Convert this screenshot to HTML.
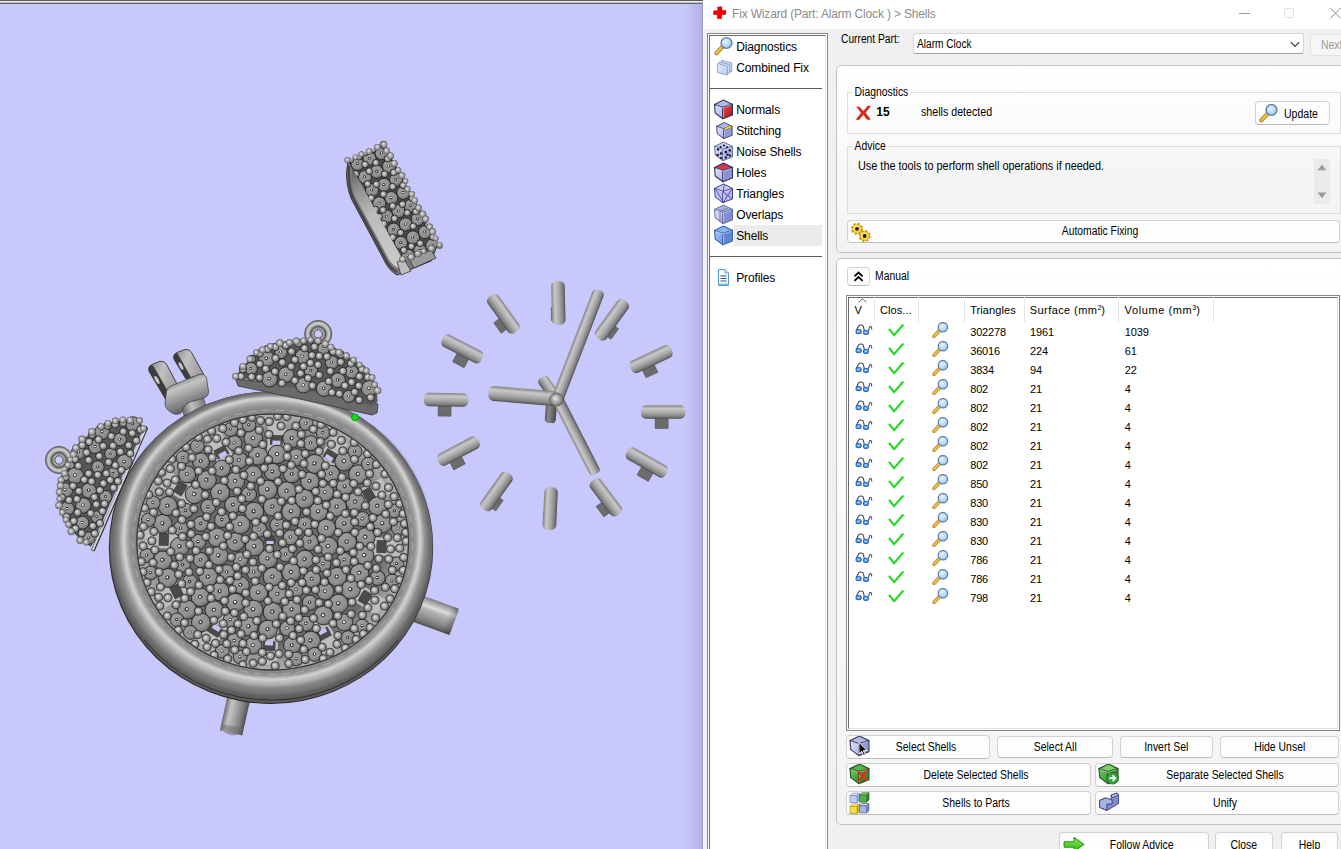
<!DOCTYPE html>
<html><head><meta charset="utf-8"><title>Fix Wizard</title>
<style>
*{box-sizing:border-box;margin:0;padding:0}
html,body{width:1341px;height:849px;overflow:hidden;background:#c8c8fc;font-family:"Liberation Sans",sans-serif;font-size:12px;color:#000}
#view{position:absolute;left:0;top:0;width:703px;height:849px;background:#c8c8fc;overflow:hidden}
#dlg{position:absolute;left:703px;top:0;width:638px;height:849px;background:#f0f0f0;overflow:hidden}
#dlg *{position:absolute}
#title{left:0;top:0;width:638px;height:29px;background:#fff}
#title .tt{left:29px;top:7px;font-size:12px;letter-spacing:-.17px;color:#8c8c8c;white-space:nowrap;line-height:14px}
.side{left:4px;top:33px;width:121px;height:830px;border:1px solid #868686;background:#fff}
.side .in{left:1px;top:1px;right:1px;bottom:0;border-left:1px solid #6a6a6a;border-top:1px solid #6a6a6a;border-right:1px solid #e3e3e3;background:#fff}
.si{left:33px;font-size:12px;letter-spacing:-.12px;white-space:nowrap;line-height:14px}
.sep{left:6px;width:113px;height:1px;background:#5a5a5a}
.ic{width:20px;height:20px;left:10px}
.gb{background:linear-gradient(#fff,#f3f3f3);border:1px solid #c2c2c2;border-radius:5px}
.fr{border:1px solid #dddddd}
.n{font-size:12px;white-space:nowrap;line-height:14px;transform:scaleX(.87);transform-origin:0 50%}
.nc{font-size:12px;white-space:nowrap;line-height:14px;transform:scaleX(.87);transform-origin:50% 50%;left:0;right:0;text-align:center}
.btn{background:#fdfdfd;border:1px solid #d2d2d2;border-bottom-color:#bdbdbd;border-radius:4px}
.cell{font-size:11px;letter-spacing:-.15px;white-space:nowrap;line-height:13px}
.hd{font-size:11px;letter-spacing:.05px;white-space:nowrap;line-height:13px}
.vs{width:1px;top:297px;height:25px;background:#e5e5e5}
</style></head><body>
<div id="view"><svg width="703" height="849" viewBox="0 0 703 849" style="position:absolute;left:0;top:0">
<defs><radialGradient id="s" cx=".5" cy=".5" r=".5" fx=".4" fy=".38"><stop offset="0" stop-color="#eaeaea"/><stop offset=".36" stop-color="#bebebe"/><stop offset=".76" stop-color="#8e8e8e"/><stop offset=".92" stop-color="#6a6a6a"/><stop offset="1" stop-color="#444"/></radialGradient><radialGradient id="c" cx=".5" cy=".5" r=".5" fx=".47" fy=".47"><stop offset="0" stop-color="#f4f4f4"/><stop offset=".09" stop-color="#e6e6e6"/><stop offset=".13" stop-color="#282828"/><stop offset=".2" stop-color="#585858"/><stop offset=".3" stop-color="#949494"/><stop offset=".8" stop-color="#8c8c8c"/><stop offset=".93" stop-color="#787878"/><stop offset="1" stop-color="#3a3a3a"/></radialGradient><linearGradient id="cs" x1=".2" y1="0" x2=".8" y2="1"><stop offset="0" stop-color="#fff" stop-opacity=".2"/><stop offset=".5" stop-color="#fff" stop-opacity="0"/><stop offset="1" stop-color="#000" stop-opacity=".28"/></linearGradient><linearGradient id="cy" x1="0" y1="0" x2="0" y2="1"><stop offset="0" stop-color="#848484"/><stop offset=".25" stop-color="#c8c8c8"/><stop offset=".55" stop-color="#aaaaaa"/><stop offset=".85" stop-color="#7e7e7e"/><stop offset="1" stop-color="#4c4c4c"/></linearGradient><linearGradient id="cyd" x1="0" y1="0" x2="0" y2="1"><stop offset="0" stop-color="#5a5a5a"/><stop offset=".3" stop-color="#8a8a8a"/><stop offset="1" stop-color="#484848"/></linearGradient><linearGradient id="cyl" x1="0" y1="0" x2="0" y2="1"><stop offset="0" stop-color="#505050"/><stop offset=".2" stop-color="#7a7a7a"/><stop offset=".5" stop-color="#a6a6a6"/><stop offset=".75" stop-color="#c4c4c4"/><stop offset="1" stop-color="#6c6c6c"/></linearGradient><linearGradient id="kcb" gradientUnits="userSpaceOnUse" x1="178" y1="378" x2="190" y2="408"><stop offset="0" stop-color="#7c7c7c"/><stop offset=".3" stop-color="#c4c4c4"/><stop offset=".6" stop-color="#9c9c9c"/><stop offset="1" stop-color="#666"/></linearGradient><linearGradient id="kst" gradientUnits="userSpaceOnUse" x1="182" y1="408" x2="206" y2="402"><stop offset="0" stop-color="#6a6a6a"/><stop offset=".4" stop-color="#c0c0c0"/><stop offset="1" stop-color="#707070"/></linearGradient><radialGradient id="fb"><stop offset="0" stop-color="#666"/><stop offset=".8" stop-color="#6c6c6c"/><stop offset=".9" stop-color="#989898"/><stop offset="1" stop-color="#b4b4b4"/></radialGradient><linearGradient id="stg" gradientUnits="userSpaceOnUse" x1="350" y1="165" x2="398" y2="262"><stop offset="0" stop-color="#4c4c4c"/><stop offset=".2" stop-color="#8a8a8a"/><stop offset=".5" stop-color="#bcbcbc"/><stop offset="1" stop-color="#cacaca"/></linearGradient><linearGradient id="kpr" x1="0" y1="0" x2="1" y2=".4"><stop offset="0" stop-color="#8a8a8a"/><stop offset=".5" stop-color="#c0c0c0"/><stop offset="1" stop-color="#a0a0a0"/></linearGradient><linearGradient id="cyr" x1="0" y1="0" x2="0" y2="1"><stop offset="0" stop-color="#7c7c7c"/><stop offset=".12" stop-color="#a8a8a8"/><stop offset=".3" stop-color="#dcdcdc"/><stop offset=".42" stop-color="#b4b4b4"/><stop offset=".7" stop-color="#909090"/><stop offset=".9" stop-color="#6e6e6e"/><stop offset="1" stop-color="#4a4a4a"/></linearGradient><linearGradient id="endg" x1="0" y1="0" x2="1" y2="0"><stop offset="0" stop-color="#000" stop-opacity="0"/><stop offset="1" stop-color="#000" stop-opacity=".28"/></linearGradient></defs>
<rect x="415.0" y="593.6" width="41.7" height="28.0" rx="0.0" fill="url(#cyr)" transform="rotate(19.9 415.0 607.6)" rx="5"/>
<rect x="446" y="607.800" width="8.500" height="28" rx="4" fill="url(#endg)" transform="rotate(20.700 454.200 621.800)"/>
<rect x="241.0" y="676.5" width="46.1" height="23.0" rx="0.0" fill="url(#cyl)" transform="rotate(102.5 241.0 688.0)" rx="4"/>
<path d="M221 724 Q222 734 232 735.500 Q241 736 243 728 Z" fill="#6a6a6a" opacity=".5"/>
<g id="key" stroke-linejoin="round">
<polygon points="181,402 203,396 207,410 184,416" fill="url(#kst)" stroke="#444" stroke-width=".6"/>
<path d="M166 400 L149.200 371.500 Q147.200 366.300 152.600 364.300 L159 361.600 Q164 360.400 166.500 364.300 L177 384 Z" fill="url(#kpr)" stroke="#222" stroke-width=".8"/>
<path d="M149.200 371.500 Q147.400 366.800 152 364.800 L154 367 L170 395 L166 400 Z" fill="#3c3c3c"/><ellipse cx="157" cy="380" rx="1.600" ry="4.500" fill="#c8c8c8" transform="rotate(-28 157 380)"/>
<path d="M186 379 L174.200 359.600 Q172.200 354.300 177.600 352.300 L184 349.800 Q189 348.600 191.500 352.500 L203.500 374 Z" fill="url(#kpr)" stroke="#222" stroke-width=".8"/>
<path d="M174.200 359.600 Q172.400 354.800 177 352.800 L178.600 355.200 L191 377.500 L186 379 Z" fill="#3c3c3c"/><ellipse cx="181" cy="366" rx="1.500" ry="4.200" fill="#c8c8c8" transform="rotate(-28 181 366)"/>
<path d="M166.500 391 Q167 387.500 171 386 L199 374.500 Q205 373 206.500 378 L208.500 391 Q209 396 204 398 L190 402 Q183 405 182 412 Q178 416 172 413 Q166 410 165 404 Z" fill="url(#kcb)" stroke="#3a3a3a" stroke-width=".7"/>
</g>
<ellipse cx="271.0" cy="547.7" rx="162.2" ry="156.2" fill="#2a2a2a"/>
<ellipse cx="271.3" cy="547.2" rx="161.5" ry="155.7" fill="#686868"/>
<ellipse cx="271.4" cy="546.5" rx="160.5" ry="154.5" fill="#6b6b6b"/>
<ellipse cx="271.4" cy="545.9" rx="159.4" ry="153.3" fill="#6e6e6e"/>
<ellipse cx="271.5" cy="545.2" rx="158.4" ry="152.2" fill="#727272"/>
<ellipse cx="271.5" cy="544.5" rx="157.3" ry="151.0" fill="#797979"/>
<ellipse cx="271.6" cy="543.8" rx="156.3" ry="149.8" fill="#808080"/>
<ellipse cx="271.6" cy="543.2" rx="155.3" ry="148.6" fill="#878787"/>
<ellipse cx="271.7" cy="542.5" rx="154.2" ry="147.5" fill="#8e8e8e"/>
<ellipse cx="271.7" cy="541.8" rx="153.2" ry="146.3" fill="#999999"/>
<ellipse cx="271.8" cy="541.2" rx="152.1" ry="145.1" fill="#a7a7a7"/>
<ellipse cx="271.9" cy="540.5" rx="151.1" ry="143.9" fill="#b6b6b6"/>
<ellipse cx="271.9" cy="539.8" rx="150.1" ry="142.8" fill="#c2c2c2"/>
<ellipse cx="272.0" cy="539.1" rx="149.0" ry="141.6" fill="#cfcfcf"/>
<ellipse cx="272.0" cy="538.9" rx="148.0" ry="140.5" fill="#cecece"/>
<ellipse cx="272.1" cy="539.2" rx="147.1" ry="139.5" fill="#bfbfbf"/>
<ellipse cx="272.1" cy="539.4" rx="146.1" ry="138.5" fill="#b2b2b2"/>
<ellipse cx="272.2" cy="539.7" rx="145.2" ry="137.6" fill="#a7a7a7"/>
<ellipse cx="272.3" cy="540.0" rx="144.2" ry="136.6" fill="#9c9c9c"/>
<ellipse cx="272.3" cy="540.2" rx="143.3" ry="135.6" fill="#969696"/>
<ellipse cx="272.4" cy="540.5" rx="142.3" ry="134.6" fill="#919191"/>
<ellipse cx="272.4" cy="540.7" rx="141.4" ry="133.6" fill="#8c8c8c"/>
<ellipse cx="272.5" cy="541.0" rx="140.4" ry="132.6" fill="#8a8a8a"/>
<ellipse cx="272.5" cy="541.2" rx="139.5" ry="131.7" fill="#898989"/>
<ellipse cx="272.6" cy="541.5" rx="138.5" ry="130.7" fill="#898989"/>
<ellipse cx="272.6" cy="541.7" rx="137.6" ry="129.7" fill="#8a8a8a"/>
<ellipse cx="272.7" cy="542.0" rx="136.6" ry="128.7" fill="#8c8c8c"/>
<path fill-rule="evenodd" fill="#000" opacity=".07" d="M109.8 547.2 a161.5 155.7 0 1 0 323.0 0 a161.5 155.7 0 1 0 -323.0 0 Z M109.8 539.2 a161.5 147.7 0 1 0 323.0 0 a161.5 147.7 0 1 0 -323.0 0 Z"/>
<path fill-rule="evenodd" fill="#000" opacity=".07" d="M109.8 547.2 a161.5 155.7 0 1 0 323.0 0 a161.5 155.7 0 1 0 -323.0 0 Z M109.8 543.2 a161.5 151.7 0 1 0 323.0 0 a161.5 151.7 0 1 0 -323.0 0 Z"/>
<clipPath id="btm"><rect x="100" y="640" width="350" height="80"/></clipPath><ellipse cx="271.3" cy="545.6" rx="160.3" ry="154.5" fill="none" stroke="#1e1e1e" stroke-width="1" opacity=".75" clip-path="url(#btm)"/>
<path d="M150 650 Q272 752 392 650" fill="none" stroke="#2a2a2a" stroke-width="1" opacity="0"/>
<ellipse cx="272.7" cy="542.0" rx="136.1" ry="128.2" fill="#333"/>
<clipPath id="fc"><ellipse cx="272.7" cy="542.0" rx="135.3" ry="127.4"/></clipPath>
<g clip-path="url(#fc)">
<ellipse cx="272.7" cy="542.0" rx="137.6" ry="129.7" fill="url(#fb)"/>
<g transform="rotate(2 276.5 440.1)"><rect x="267.5" y="421.1" width="18" height="36" fill="#bebebe"/><rect x="270.0" y="435.1" width="13" height="10" fill="#4a4a4a"/><rect x="272.5" y="440.6" width="8" height="4.5" fill="#c4c4f4"/></g>
<g transform="rotate(32 330.5 455.7)"><rect x="321.5" y="436.7" width="18" height="36" fill="#bebebe"/><rect x="324.0" y="450.7" width="13" height="10" fill="#4a4a4a"/><rect x="326.5" y="456.2" width="8" height="4.5" fill="#c4c4f4"/></g>
<g transform="rotate(62 368.9 494.6)"><rect x="359.9" y="475.6" width="18" height="36" fill="#bebebe"/><rect x="362.4" y="489.6" width="13" height="10" fill="#4a4a4a"/><rect x="364.9" y="495.1" width="8" height="4.5" fill="#4a4a4a"/></g>
<g transform="rotate(92 381.6 546.6)"><rect x="372.6" y="527.6" width="18" height="36" fill="#bebebe"/><rect x="375.1" y="541.6" width="13" height="10" fill="#4a4a4a"/><rect x="377.6" y="547.1" width="8" height="4.5" fill="#4a4a4a"/></g>
<g transform="rotate(122 365.1 597.6)"><rect x="356.1" y="578.6" width="18" height="36" fill="#bebebe"/><rect x="358.6" y="592.6" width="13" height="10" fill="#4a4a4a"/><rect x="361.1" y="598.1" width="8" height="4.5" fill="#4a4a4a"/></g>
<g transform="rotate(152 323.9 633.9)"><rect x="314.9" y="614.9" width="18" height="36" fill="#bebebe"/><rect x="317.4" y="628.9" width="13" height="10" fill="#4a4a4a"/><rect x="319.9" y="634.4" width="8" height="4.5" fill="#c4c4f4"/></g>
<g transform="rotate(182 268.9 645.9)"><rect x="259.9" y="626.9" width="18" height="36" fill="#bebebe"/><rect x="262.4" y="640.9" width="13" height="10" fill="#4a4a4a"/><rect x="264.9" y="646.4" width="8" height="4.5" fill="#c4c4f4"/></g>
<g transform="rotate(212 214.9 630.3)"><rect x="205.9" y="611.3" width="18" height="36" fill="#bebebe"/><rect x="208.4" y="625.3" width="13" height="10" fill="#4a4a4a"/><rect x="210.9" y="630.8" width="8" height="4.5" fill="#c4c4f4"/></g>
<g transform="rotate(242 176.5 591.4)"><rect x="167.5" y="572.4" width="18" height="36" fill="#bebebe"/><rect x="170.0" y="586.4" width="13" height="10" fill="#4a4a4a"/><rect x="172.5" y="591.9" width="8" height="4.5" fill="#4a4a4a"/></g>
<g transform="rotate(272 163.8 539.4)"><rect x="154.8" y="520.4" width="18" height="36" fill="#bebebe"/><rect x="157.3" y="534.4" width="13" height="10" fill="#4a4a4a"/><rect x="159.8" y="539.9" width="8" height="4.5" fill="#4a4a4a"/></g>
<g transform="rotate(302 180.3 488.4)"><rect x="171.3" y="469.4" width="18" height="36" fill="#bebebe"/><rect x="173.8" y="483.4" width="13" height="10" fill="#4a4a4a"/><rect x="176.3" y="488.9" width="8" height="4.5" fill="#4a4a4a"/></g>
<g transform="rotate(332 221.5 452.1)"><rect x="212.5" y="433.1" width="18" height="36" fill="#bebebe"/><rect x="215.0" y="447.1" width="13" height="10" fill="#4a4a4a"/><rect x="217.5" y="452.6" width="8" height="4.5" fill="#c4c4f4"/></g>
<circle cx="270" cy="540.5" r="6" fill="#484848"/><rect x="266.500" y="541" width="7" height="3" fill="#c4c4f4"/>
<circle cx="277.5" cy="525.1" r="7.6" fill="url(#c)" stroke="#242424" stroke-width=".8"/><circle cx="277.5" cy="525.1" r="7.0" fill="url(#cs)"/><circle cx="290.7" cy="537.4" r="7.6" fill="url(#c)" stroke="#242424" stroke-width=".8"/><circle cx="290.7" cy="537.4" r="7.0" fill="url(#cs)"/><circle cx="285.9" cy="554.4" r="7.6" fill="url(#c)" stroke="#242424" stroke-width=".8"/><circle cx="285.9" cy="554.4" r="7.0" fill="url(#cs)"/><circle cx="267.9" cy="558.9" r="9.4" fill="url(#c)" stroke="#242424" stroke-width=".8"/><circle cx="267.9" cy="558.9" r="8.8" fill="url(#cs)"/><circle cx="254.7" cy="546.6" r="9.4" fill="url(#c)" stroke="#242424" stroke-width=".8"/><circle cx="254.7" cy="546.6" r="8.8" fill="url(#cs)"/><circle cx="259.5" cy="529.6" r="7.6" fill="url(#c)" stroke="#242424" stroke-width=".8"/><circle cx="259.5" cy="529.6" r="7.0" fill="url(#cs)"/><circle cx="272.7" cy="507.0" r="9.4" fill="url(#c)" stroke="#242424" stroke-width=".8"/><circle cx="272.7" cy="507.0" r="8.8" fill="url(#cs)"/><circle cx="291.3" cy="511.7" r="9.6" fill="url(#c)" stroke="#242424" stroke-width=".8"/><circle cx="291.3" cy="511.7" r="9.0" fill="url(#cs)"/><circle cx="304.9" cy="524.5" r="7.6" fill="url(#c)" stroke="#242424" stroke-width=".8"/><circle cx="304.9" cy="524.5" r="7.0" fill="url(#cs)"/><circle cx="309.9" cy="542.0" r="8.6" fill="url(#c)" stroke="#242424" stroke-width=".8"/><circle cx="309.9" cy="542.0" r="8.0" fill="url(#cs)"/><circle cx="304.9" cy="559.5" r="9.4" fill="url(#c)" stroke="#242424" stroke-width=".8"/><circle cx="304.9" cy="559.5" r="8.8" fill="url(#cs)"/><circle cx="291.3" cy="572.3" r="9.6" fill="url(#c)" stroke="#242424" stroke-width=".8"/><circle cx="291.3" cy="572.3" r="9.0" fill="url(#cs)"/><circle cx="272.7" cy="577.0" r="9.6" fill="url(#c)" stroke="#242424" stroke-width=".8"/><circle cx="272.7" cy="577.0" r="9.0" fill="url(#cs)"/><circle cx="254.1" cy="572.3" r="7.6" fill="url(#c)" stroke="#242424" stroke-width=".8"/><circle cx="254.1" cy="572.3" r="7.0" fill="url(#cs)"/><circle cx="240.5" cy="559.5" r="7.6" fill="url(#c)" stroke="#242424" stroke-width=".8"/><circle cx="240.5" cy="559.5" r="7.0" fill="url(#cs)"/><circle cx="235.5" cy="542.0" r="9.4" fill="url(#c)" stroke="#242424" stroke-width=".8"/><circle cx="235.5" cy="542.0" r="8.8" fill="url(#cs)"/><circle cx="240.5" cy="524.5" r="9.6" fill="url(#c)" stroke="#242424" stroke-width=".8"/><circle cx="240.5" cy="524.5" r="9.0" fill="url(#cs)"/><circle cx="254.1" cy="511.7" r="9.6" fill="url(#c)" stroke="#242424" stroke-width=".8"/><circle cx="254.1" cy="511.7" r="9.0" fill="url(#cs)"/><circle cx="287.0" cy="491.2" r="9.6" fill="url(#c)" stroke="#242424" stroke-width=".8"/><circle cx="287.0" cy="491.2" r="9.0" fill="url(#cs)"/><circle cx="304.6" cy="498.9" r="9.6" fill="url(#c)" stroke="#242424" stroke-width=".8"/><circle cx="304.6" cy="498.9" r="9.0" fill="url(#cs)"/><circle cx="318.4" cy="511.8" r="9.4" fill="url(#c)" stroke="#242424" stroke-width=".8"/><circle cx="318.4" cy="511.8" r="8.8" fill="url(#cs)"/><circle cx="326.6" cy="528.3" r="9.4" fill="url(#c)" stroke="#242424" stroke-width=".8"/><circle cx="326.6" cy="528.3" r="8.8" fill="url(#cs)"/><circle cx="328.3" cy="546.5" r="9.6" fill="url(#c)" stroke="#242424" stroke-width=".8"/><circle cx="328.3" cy="546.5" r="9.0" fill="url(#cs)"/><circle cx="323.3" cy="564.1" r="7.6" fill="url(#c)" stroke="#242424" stroke-width=".8"/><circle cx="323.3" cy="564.1" r="7.0" fill="url(#cs)"/><circle cx="312.2" cy="579.1" r="8.6" fill="url(#c)" stroke="#242424" stroke-width=".8"/><circle cx="312.2" cy="579.1" r="8.0" fill="url(#cs)"/><circle cx="296.4" cy="589.6" r="7.6" fill="url(#c)" stroke="#242424" stroke-width=".8"/><circle cx="296.4" cy="589.6" r="7.0" fill="url(#cs)"/><circle cx="277.7" cy="594.3" r="9.4" fill="url(#c)" stroke="#242424" stroke-width=".8"/><circle cx="277.7" cy="594.3" r="8.8" fill="url(#cs)"/><circle cx="258.4" cy="592.8" r="9.4" fill="url(#c)" stroke="#242424" stroke-width=".8"/><circle cx="258.4" cy="592.8" r="8.8" fill="url(#cs)"/><circle cx="240.8" cy="585.1" r="8.6" fill="url(#c)" stroke="#242424" stroke-width=".8"/><circle cx="240.8" cy="585.1" r="8.0" fill="url(#cs)"/><circle cx="227.0" cy="572.2" r="7.6" fill="url(#c)" stroke="#242424" stroke-width=".8"/><circle cx="227.0" cy="572.2" r="7.0" fill="url(#cs)"/><circle cx="218.8" cy="555.7" r="9.6" fill="url(#c)" stroke="#242424" stroke-width=".8"/><circle cx="218.8" cy="555.7" r="9.0" fill="url(#cs)"/><circle cx="217.1" cy="537.5" r="9.6" fill="url(#c)" stroke="#242424" stroke-width=".8"/><circle cx="217.1" cy="537.5" r="9.0" fill="url(#cs)"/><circle cx="222.1" cy="519.9" r="7.6" fill="url(#c)" stroke="#242424" stroke-width=".8"/><circle cx="222.1" cy="519.9" r="7.0" fill="url(#cs)"/><circle cx="233.2" cy="504.9" r="8.6" fill="url(#c)" stroke="#242424" stroke-width=".8"/><circle cx="233.2" cy="504.9" r="8.0" fill="url(#cs)"/><circle cx="249.0" cy="494.4" r="7.6" fill="url(#c)" stroke="#242424" stroke-width=".8"/><circle cx="249.0" cy="494.4" r="7.0" fill="url(#cs)"/><circle cx="267.7" cy="489.7" r="9.6" fill="url(#c)" stroke="#242424" stroke-width=".8"/><circle cx="267.7" cy="489.7" r="9.0" fill="url(#cs)"/><circle cx="272.7" cy="471.9" r="8.6" fill="url(#c)" stroke="#242424" stroke-width=".8"/><circle cx="272.7" cy="471.9" r="8.0" fill="url(#cs)"/><circle cx="292.0" cy="474.3" r="8.6" fill="url(#c)" stroke="#242424" stroke-width=".8"/><circle cx="292.0" cy="474.3" r="8.0" fill="url(#cs)"/><circle cx="309.9" cy="481.3" r="9.4" fill="url(#c)" stroke="#242424" stroke-width=".8"/><circle cx="309.9" cy="481.3" r="8.8" fill="url(#cs)"/><circle cx="325.3" cy="492.5" r="8.6" fill="url(#c)" stroke="#242424" stroke-width=".8"/><circle cx="325.3" cy="492.5" r="8.0" fill="url(#cs)"/><circle cx="337.1" cy="507.0" r="9.6" fill="url(#c)" stroke="#242424" stroke-width=".8"/><circle cx="337.1" cy="507.0" r="9.0" fill="url(#cs)"/><circle cx="344.6" cy="523.9" r="9.6" fill="url(#c)" stroke="#242424" stroke-width=".8"/><circle cx="344.6" cy="523.9" r="9.0" fill="url(#cs)"/><circle cx="347.1" cy="542.0" r="9.6" fill="url(#c)" stroke="#242424" stroke-width=".8"/><circle cx="347.1" cy="542.0" r="9.0" fill="url(#cs)"/><circle cx="344.6" cy="560.1" r="7.6" fill="url(#c)" stroke="#242424" stroke-width=".8"/><circle cx="344.6" cy="560.1" r="7.0" fill="url(#cs)"/><circle cx="337.1" cy="577.0" r="9.6" fill="url(#c)" stroke="#242424" stroke-width=".8"/><circle cx="337.1" cy="577.0" r="9.0" fill="url(#cs)"/><circle cx="325.3" cy="591.5" r="8.6" fill="url(#c)" stroke="#242424" stroke-width=".8"/><circle cx="325.3" cy="591.5" r="8.0" fill="url(#cs)"/><circle cx="309.9" cy="602.7" r="7.6" fill="url(#c)" stroke="#242424" stroke-width=".8"/><circle cx="309.9" cy="602.7" r="7.0" fill="url(#cs)"/><circle cx="292.0" cy="609.7" r="9.6" fill="url(#c)" stroke="#242424" stroke-width=".8"/><circle cx="292.0" cy="609.7" r="9.0" fill="url(#cs)"/><circle cx="272.7" cy="612.1" r="9.6" fill="url(#c)" stroke="#242424" stroke-width=".8"/><circle cx="272.7" cy="612.1" r="9.0" fill="url(#cs)"/><circle cx="253.4" cy="609.7" r="9.6" fill="url(#c)" stroke="#242424" stroke-width=".8"/><circle cx="253.4" cy="609.7" r="9.0" fill="url(#cs)"/><circle cx="235.5" cy="602.7" r="9.4" fill="url(#c)" stroke="#242424" stroke-width=".8"/><circle cx="235.5" cy="602.7" r="8.8" fill="url(#cs)"/><circle cx="220.1" cy="591.5" r="9.4" fill="url(#c)" stroke="#242424" stroke-width=".8"/><circle cx="220.1" cy="591.5" r="8.8" fill="url(#cs)"/><circle cx="208.3" cy="577.0" r="9.6" fill="url(#c)" stroke="#242424" stroke-width=".8"/><circle cx="208.3" cy="577.0" r="9.0" fill="url(#cs)"/><circle cx="200.8" cy="560.1" r="7.6" fill="url(#c)" stroke="#242424" stroke-width=".8"/><circle cx="200.8" cy="560.1" r="7.0" fill="url(#cs)"/><circle cx="198.3" cy="542.0" r="7.6" fill="url(#c)" stroke="#242424" stroke-width=".8"/><circle cx="198.3" cy="542.0" r="7.0" fill="url(#cs)"/><circle cx="200.8" cy="523.9" r="7.6" fill="url(#c)" stroke="#242424" stroke-width=".8"/><circle cx="200.8" cy="523.9" r="7.0" fill="url(#cs)"/><circle cx="208.3" cy="507.0" r="7.6" fill="url(#c)" stroke="#242424" stroke-width=".8"/><circle cx="208.3" cy="507.0" r="7.0" fill="url(#cs)"/><circle cx="220.1" cy="492.5" r="9.6" fill="url(#c)" stroke="#242424" stroke-width=".8"/><circle cx="220.1" cy="492.5" r="9.0" fill="url(#cs)"/><circle cx="235.5" cy="481.3" r="9.4" fill="url(#c)" stroke="#242424" stroke-width=".8"/><circle cx="235.5" cy="481.3" r="8.8" fill="url(#cs)"/><circle cx="253.4" cy="474.3" r="8.6" fill="url(#c)" stroke="#242424" stroke-width=".8"/><circle cx="253.4" cy="474.3" r="8.0" fill="url(#cs)"/><circle cx="296.6" cy="457.4" r="8.6" fill="url(#c)" stroke="#242424" stroke-width=".8"/><circle cx="296.6" cy="457.4" r="8.0" fill="url(#cs)"/><circle cx="314.8" cy="463.9" r="9.6" fill="url(#c)" stroke="#242424" stroke-width=".8"/><circle cx="314.8" cy="463.9" r="9.0" fill="url(#cs)"/><circle cx="331.1" cy="473.8" r="8.6" fill="url(#c)" stroke="#242424" stroke-width=".8"/><circle cx="331.1" cy="473.8" r="8.0" fill="url(#cs)"/><circle cx="344.9" cy="486.8" r="8.6" fill="url(#c)" stroke="#242424" stroke-width=".8"/><circle cx="344.9" cy="486.8" r="8.0" fill="url(#cs)"/><circle cx="355.5" cy="502.1" r="9.6" fill="url(#c)" stroke="#242424" stroke-width=".8"/><circle cx="355.5" cy="502.1" r="9.0" fill="url(#cs)"/><circle cx="362.5" cy="519.2" r="7.6" fill="url(#c)" stroke="#242424" stroke-width=".8"/><circle cx="362.5" cy="519.2" r="7.0" fill="url(#cs)"/><circle cx="365.6" cy="537.3" r="9.6" fill="url(#c)" stroke="#242424" stroke-width=".8"/><circle cx="365.6" cy="537.3" r="9.0" fill="url(#cs)"/><circle cx="364.6" cy="555.5" r="9.4" fill="url(#c)" stroke="#242424" stroke-width=".8"/><circle cx="364.6" cy="555.5" r="8.8" fill="url(#cs)"/><circle cx="359.6" cy="573.2" r="9.4" fill="url(#c)" stroke="#242424" stroke-width=".8"/><circle cx="359.6" cy="573.2" r="8.8" fill="url(#cs)"/><circle cx="350.8" cy="589.6" r="9.6" fill="url(#c)" stroke="#242424" stroke-width=".8"/><circle cx="350.8" cy="589.6" r="9.0" fill="url(#cs)"/><circle cx="338.6" cy="603.8" r="9.6" fill="url(#c)" stroke="#242424" stroke-width=".8"/><circle cx="338.6" cy="603.8" r="9.0" fill="url(#cs)"/><circle cx="323.5" cy="615.4" r="9.6" fill="url(#c)" stroke="#242424" stroke-width=".8"/><circle cx="323.5" cy="615.4" r="9.0" fill="url(#cs)"/><circle cx="306.2" cy="623.7" r="7.6" fill="url(#c)" stroke="#242424" stroke-width=".8"/><circle cx="306.2" cy="623.7" r="7.0" fill="url(#cs)"/><circle cx="287.4" cy="628.5" r="7.6" fill="url(#c)" stroke="#242424" stroke-width=".8"/><circle cx="287.4" cy="628.5" r="7.0" fill="url(#cs)"/><circle cx="268.0" cy="629.5" r="9.4" fill="url(#c)" stroke="#242424" stroke-width=".8"/><circle cx="268.0" cy="629.5" r="8.8" fill="url(#cs)"/><circle cx="248.8" cy="626.6" r="9.4" fill="url(#c)" stroke="#242424" stroke-width=".8"/><circle cx="248.8" cy="626.6" r="8.8" fill="url(#cs)"/><circle cx="230.6" cy="620.1" r="7.6" fill="url(#c)" stroke="#242424" stroke-width=".8"/><circle cx="230.6" cy="620.1" r="7.0" fill="url(#cs)"/><circle cx="214.3" cy="610.2" r="9.4" fill="url(#c)" stroke="#242424" stroke-width=".8"/><circle cx="214.3" cy="610.2" r="8.8" fill="url(#cs)"/><circle cx="200.5" cy="597.2" r="9.4" fill="url(#c)" stroke="#242424" stroke-width=".8"/><circle cx="200.5" cy="597.2" r="8.8" fill="url(#cs)"/><circle cx="189.9" cy="581.9" r="7.6" fill="url(#c)" stroke="#242424" stroke-width=".8"/><circle cx="189.9" cy="581.9" r="7.0" fill="url(#cs)"/><circle cx="182.9" cy="564.8" r="7.6" fill="url(#c)" stroke="#242424" stroke-width=".8"/><circle cx="182.9" cy="564.8" r="7.0" fill="url(#cs)"/><circle cx="179.8" cy="546.7" r="9.6" fill="url(#c)" stroke="#242424" stroke-width=".8"/><circle cx="179.8" cy="546.7" r="9.0" fill="url(#cs)"/><circle cx="180.8" cy="528.5" r="7.6" fill="url(#c)" stroke="#242424" stroke-width=".8"/><circle cx="180.8" cy="528.5" r="7.0" fill="url(#cs)"/><circle cx="185.8" cy="510.8" r="7.6" fill="url(#c)" stroke="#242424" stroke-width=".8"/><circle cx="185.8" cy="510.8" r="7.0" fill="url(#cs)"/><circle cx="194.6" cy="494.4" r="9.4" fill="url(#c)" stroke="#242424" stroke-width=".8"/><circle cx="194.6" cy="494.4" r="8.8" fill="url(#cs)"/><circle cx="206.8" cy="480.2" r="9.6" fill="url(#c)" stroke="#242424" stroke-width=".8"/><circle cx="206.8" cy="480.2" r="9.0" fill="url(#cs)"/><circle cx="221.9" cy="468.6" r="8.6" fill="url(#c)" stroke="#242424" stroke-width=".8"/><circle cx="221.9" cy="468.6" r="8.0" fill="url(#cs)"/><circle cx="239.2" cy="460.3" r="8.6" fill="url(#c)" stroke="#242424" stroke-width=".8"/><circle cx="239.2" cy="460.3" r="8.0" fill="url(#cs)"/><circle cx="258.0" cy="455.5" r="9.6" fill="url(#c)" stroke="#242424" stroke-width=".8"/><circle cx="258.0" cy="455.5" r="9.0" fill="url(#cs)"/><circle cx="277.4" cy="454.5" r="9.4" fill="url(#c)" stroke="#242424" stroke-width=".8"/><circle cx="277.4" cy="454.5" r="8.8" fill="url(#cs)"/><circle cx="292.1" cy="438.5" r="9.4" fill="url(#c)" stroke="#242424" stroke-width=".8"/><circle cx="292.1" cy="438.5" r="8.8" fill="url(#cs)"/><circle cx="310.9" cy="443.2" r="7.6" fill="url(#c)" stroke="#242424" stroke-width=".8"/><circle cx="310.9" cy="443.2" r="7.0" fill="url(#cs)"/><circle cx="344.4" cy="461.5" r="9.6" fill="url(#c)" stroke="#242424" stroke-width=".8"/><circle cx="344.4" cy="461.5" r="9.0" fill="url(#cs)"/><circle cx="358.2" cy="474.4" r="9.6" fill="url(#c)" stroke="#242424" stroke-width=".8"/><circle cx="358.2" cy="474.4" r="9.0" fill="url(#cs)"/><circle cx="377.6" cy="506.1" r="9.4" fill="url(#c)" stroke="#242424" stroke-width=".8"/><circle cx="377.6" cy="506.1" r="8.8" fill="url(#cs)"/><circle cx="382.6" cy="523.7" r="9.4" fill="url(#c)" stroke="#242424" stroke-width=".8"/><circle cx="382.6" cy="523.7" r="8.8" fill="url(#cs)"/><circle cx="377.6" cy="577.9" r="7.6" fill="url(#c)" stroke="#242424" stroke-width=".8"/><circle cx="377.6" cy="577.9" r="7.0" fill="url(#cs)"/><circle cx="344.4" cy="622.5" r="8.6" fill="url(#c)" stroke="#242424" stroke-width=".8"/><circle cx="344.4" cy="622.5" r="8.0" fill="url(#cs)"/><circle cx="310.9" cy="640.8" r="9.6" fill="url(#c)" stroke="#242424" stroke-width=".8"/><circle cx="310.9" cy="640.8" r="9.0" fill="url(#cs)"/><circle cx="292.1" cy="645.5" r="8.6" fill="url(#c)" stroke="#242424" stroke-width=".8"/><circle cx="292.1" cy="645.5" r="8.0" fill="url(#cs)"/><circle cx="253.3" cy="645.5" r="8.6" fill="url(#c)" stroke="#242424" stroke-width=".8"/><circle cx="253.3" cy="645.5" r="8.0" fill="url(#cs)"/><circle cx="234.5" cy="640.8" r="7.6" fill="url(#c)" stroke="#242424" stroke-width=".8"/><circle cx="234.5" cy="640.8" r="7.0" fill="url(#cs)"/><circle cx="201.0" cy="622.5" r="9.6" fill="url(#c)" stroke="#242424" stroke-width=".8"/><circle cx="201.0" cy="622.5" r="9.0" fill="url(#cs)"/><circle cx="187.2" cy="609.6" r="9.6" fill="url(#c)" stroke="#242424" stroke-width=".8"/><circle cx="187.2" cy="609.6" r="9.0" fill="url(#cs)"/><circle cx="167.8" cy="577.9" r="9.6" fill="url(#c)" stroke="#242424" stroke-width=".8"/><circle cx="167.8" cy="577.9" r="9.0" fill="url(#cs)"/><circle cx="162.8" cy="560.3" r="9.4" fill="url(#c)" stroke="#242424" stroke-width=".8"/><circle cx="162.8" cy="560.3" r="8.8" fill="url(#cs)"/><circle cx="162.8" cy="523.7" r="9.4" fill="url(#c)" stroke="#242424" stroke-width=".8"/><circle cx="162.8" cy="523.7" r="8.8" fill="url(#cs)"/><circle cx="167.8" cy="506.1" r="9.6" fill="url(#c)" stroke="#242424" stroke-width=".8"/><circle cx="167.8" cy="506.1" r="9.0" fill="url(#cs)"/><circle cx="187.2" cy="474.4" r="8.6" fill="url(#c)" stroke="#242424" stroke-width=".8"/><circle cx="187.2" cy="474.4" r="8.0" fill="url(#cs)"/><circle cx="201.0" cy="461.5" r="8.6" fill="url(#c)" stroke="#242424" stroke-width=".8"/><circle cx="201.0" cy="461.5" r="8.0" fill="url(#cs)"/><circle cx="234.5" cy="443.2" r="7.6" fill="url(#c)" stroke="#242424" stroke-width=".8"/><circle cx="234.5" cy="443.2" r="7.0" fill="url(#cs)"/><circle cx="253.3" cy="438.5" r="9.4" fill="url(#c)" stroke="#242424" stroke-width=".8"/><circle cx="253.3" cy="438.5" r="8.8" fill="url(#cs)"/><circle cx="306.2" cy="423.5" r="7.0" fill="url(#c)" stroke="#242424" stroke-width=".8"/><circle cx="306.2" cy="423.5" r="6.4" fill="url(#cs)"/><circle cx="323.1" cy="432.7" r="7.0" fill="url(#c)" stroke="#242424" stroke-width=".8"/><circle cx="323.1" cy="432.7" r="6.4" fill="url(#cs)"/><circle cx="355.0" cy="451.6" r="7.0" fill="url(#c)" stroke="#242424" stroke-width=".8"/><circle cx="355.0" cy="451.6" r="6.4" fill="url(#cs)"/><circle cx="368.4" cy="464.1" r="7.0" fill="url(#c)" stroke="#242424" stroke-width=".8"/><circle cx="368.4" cy="464.1" r="6.4" fill="url(#cs)"/><circle cx="394.8" cy="511.0" r="7.0" fill="url(#c)" stroke="#242424" stroke-width=".8"/><circle cx="394.8" cy="511.0" r="6.4" fill="url(#cs)"/><circle cx="398.4" cy="528.4" r="7.0" fill="url(#c)" stroke="#242424" stroke-width=".8"/><circle cx="398.4" cy="528.4" r="6.4" fill="url(#cs)"/><circle cx="397.0" cy="563.9" r="7.0" fill="url(#c)" stroke="#242424" stroke-width=".8"/><circle cx="397.0" cy="563.9" r="6.4" fill="url(#cs)"/><circle cx="392.2" cy="581.1" r="7.0" fill="url(#c)" stroke="#242424" stroke-width=".8"/><circle cx="392.2" cy="581.1" r="6.4" fill="url(#cs)"/><circle cx="362.3" cy="626.1" r="7.0" fill="url(#c)" stroke="#242424" stroke-width=".8"/><circle cx="362.3" cy="626.1" r="6.4" fill="url(#cs)"/><circle cx="348.0" cy="637.7" r="7.0" fill="url(#c)" stroke="#242424" stroke-width=".8"/><circle cx="348.0" cy="637.7" r="6.4" fill="url(#cs)"/><circle cx="314.7" cy="654.4" r="7.0" fill="url(#c)" stroke="#242424" stroke-width=".8"/><circle cx="314.7" cy="654.4" r="6.4" fill="url(#cs)"/><circle cx="296.4" cy="659.0" r="7.0" fill="url(#c)" stroke="#242424" stroke-width=".8"/><circle cx="296.4" cy="659.0" r="6.4" fill="url(#cs)"/><circle cx="240.2" cy="657.1" r="7.0" fill="url(#c)" stroke="#242424" stroke-width=".8"/><circle cx="240.2" cy="657.1" r="6.4" fill="url(#cs)"/><circle cx="222.3" cy="651.3" r="7.0" fill="url(#c)" stroke="#242424" stroke-width=".8"/><circle cx="222.3" cy="651.3" r="6.4" fill="url(#cs)"/><circle cx="190.4" cy="632.4" r="7.0" fill="url(#c)" stroke="#242424" stroke-width=".8"/><circle cx="190.4" cy="632.4" r="6.4" fill="url(#cs)"/><circle cx="177.0" cy="619.9" r="7.0" fill="url(#c)" stroke="#242424" stroke-width=".8"/><circle cx="177.0" cy="619.9" r="6.4" fill="url(#cs)"/><circle cx="150.6" cy="573.0" r="7.0" fill="url(#c)" stroke="#242424" stroke-width=".8"/><circle cx="150.6" cy="573.0" r="6.4" fill="url(#cs)"/><circle cx="147.0" cy="555.6" r="7.0" fill="url(#c)" stroke="#242424" stroke-width=".8"/><circle cx="147.0" cy="555.6" r="6.4" fill="url(#cs)"/><circle cx="148.4" cy="520.1" r="7.0" fill="url(#c)" stroke="#242424" stroke-width=".8"/><circle cx="148.4" cy="520.1" r="6.4" fill="url(#cs)"/><circle cx="153.2" cy="502.9" r="7.0" fill="url(#c)" stroke="#242424" stroke-width=".8"/><circle cx="153.2" cy="502.9" r="6.4" fill="url(#cs)"/><circle cx="183.1" cy="457.9" r="7.0" fill="url(#c)" stroke="#242424" stroke-width=".8"/><circle cx="183.1" cy="457.9" r="6.4" fill="url(#cs)"/><circle cx="197.4" cy="446.3" r="7.0" fill="url(#c)" stroke="#242424" stroke-width=".8"/><circle cx="197.4" cy="446.3" r="6.4" fill="url(#cs)"/><circle cx="230.7" cy="429.6" r="7.0" fill="url(#c)" stroke="#242424" stroke-width=".8"/><circle cx="230.7" cy="429.6" r="6.4" fill="url(#cs)"/><circle cx="249.0" cy="425.0" r="7.0" fill="url(#c)" stroke="#242424" stroke-width=".8"/><circle cx="249.0" cy="425.0" r="6.4" fill="url(#cs)"/><g stroke="#2a2a2a" stroke-width=".7"><circle cx="397.2" cy="537.8" r="4.1" fill="url(#s)"/><circle cx="292.9" cy="635.6" r="4.1" fill="url(#s)"/><circle cx="376.3" cy="568.4" r="4.1" fill="url(#s)"/><circle cx="298.9" cy="489.2" r="4.1" fill="url(#s)"/><circle cx="184.7" cy="598.3" r="4.1" fill="url(#s)"/><circle cx="267.9" cy="600.9" r="4.1" fill="url(#s)"/><circle cx="337.0" cy="644.2" r="4.1" fill="url(#s)"/><circle cx="232.5" cy="589.3" r="4.1" fill="url(#s)"/><circle cx="306.6" cy="511.9" r="4.1" fill="url(#s)"/><circle cx="336.4" cy="562.7" r="4.1" fill="url(#s)"/><circle cx="159.8" cy="605.9" r="4.1" fill="url(#s)"/><circle cx="303.8" cy="649.4" r="4.1" fill="url(#s)"/><circle cx="192.0" cy="457.6" r="4.1" fill="url(#s)"/><circle cx="190.9" cy="524.4" r="4.1" fill="url(#s)"/><circle cx="212.2" cy="457.5" r="4.1" fill="url(#s)"/><circle cx="260.5" cy="420.6" r="4.1" fill="url(#s)"/><circle cx="140.0" cy="534.9" r="4.1" fill="url(#s)"/><circle cx="243.8" cy="616.6" r="4.1" fill="url(#s)"/><circle cx="390.0" cy="598.8" r="4.1" fill="url(#s)"/><circle cx="172.3" cy="530.1" r="4.1" fill="url(#s)"/><circle cx="375.6" cy="617.8" r="4.1" fill="url(#s)"/><circle cx="332.9" cy="623.3" r="4.1" fill="url(#s)"/><circle cx="194.9" cy="644.2" r="4.1" fill="url(#s)"/><circle cx="282.7" cy="616.3" r="4.1" fill="url(#s)"/><circle cx="269.3" cy="421.6" r="4.1" fill="url(#s)"/><circle cx="221.6" cy="511.7" r="4.1" fill="url(#s)"/><circle cx="399.7" cy="548.2" r="4.1" fill="url(#s)"/><circle cx="282.4" cy="542.8" r="4.1" fill="url(#s)"/><circle cx="189.0" cy="572.1" r="4.1" fill="url(#s)"/><circle cx="369.5" cy="473.7" r="4.1" fill="url(#s)"/><circle cx="381.9" cy="495.0" r="4.1" fill="url(#s)"/><circle cx="207.5" cy="439.1" r="4.1" fill="url(#s)"/><circle cx="322.2" cy="647.1" r="4.1" fill="url(#s)"/><circle cx="299.7" cy="543.1" r="4.1" fill="url(#s)"/><circle cx="207.1" cy="647.0" r="4.1" fill="url(#s)"/><circle cx="333.1" cy="432.3" r="4.1" fill="url(#s)"/><circle cx="317.7" cy="500.6" r="4.1" fill="url(#s)"/><circle cx="316.0" cy="559.8" r="4.1" fill="url(#s)"/><circle cx="206.7" cy="516.9" r="4.1" fill="url(#s)"/><circle cx="393.5" cy="521.7" r="4.1" fill="url(#s)"/><circle cx="280.0" cy="567.0" r="4.1" fill="url(#s)"/><circle cx="242.9" cy="643.5" r="4.1" fill="url(#s)"/><circle cx="253.6" cy="536.3" r="4.1" fill="url(#s)"/><circle cx="279.0" cy="653.7" r="4.1" fill="url(#s)"/><circle cx="300.8" cy="443.7" r="4.1" fill="url(#s)"/><circle cx="260.6" cy="481.2" r="4.1" fill="url(#s)"/><circle cx="295.0" cy="521.4" r="4.1" fill="url(#s)"/><circle cx="160.5" cy="587.0" r="4.1" fill="url(#s)"/><circle cx="159.3" cy="491.9" r="4.1" fill="url(#s)"/><circle cx="190.0" cy="558.3" r="4.1" fill="url(#s)"/><circle cx="353.3" cy="552.4" r="4.1" fill="url(#s)"/><circle cx="376.0" cy="486.2" r="4.1" fill="url(#s)"/><circle cx="143.1" cy="546.0" r="4.1" fill="url(#s)"/><circle cx="176.1" cy="604.8" r="4.1" fill="url(#s)"/><circle cx="361.2" cy="584.6" r="4.1" fill="url(#s)"/><circle cx="354.7" cy="522.0" r="4.1" fill="url(#s)"/><circle cx="154.0" cy="531.5" r="4.1" fill="url(#s)"/><circle cx="354.4" cy="512.6" r="4.1" fill="url(#s)"/><circle cx="224.4" cy="480.6" r="4.1" fill="url(#s)"/><circle cx="209.4" cy="550.8" r="4.1" fill="url(#s)"/><circle cx="267.3" cy="534.0" r="4.1" fill="url(#s)"/><circle cx="262.3" cy="661.2" r="4.1" fill="url(#s)"/><circle cx="161.5" cy="472.2" r="4.1" fill="url(#s)"/><circle cx="241.8" cy="498.9" r="4.1" fill="url(#s)"/><circle cx="245.8" cy="593.0" r="4.1" fill="url(#s)"/><circle cx="316.2" cy="569.7" r="4.1" fill="url(#s)"/><circle cx="229.9" cy="580.5" r="4.1" fill="url(#s)"/><circle cx="215.4" cy="643.4" r="4.1" fill="url(#s)"/><circle cx="319.1" cy="602.7" r="4.1" fill="url(#s)"/><circle cx="191.2" cy="533.8" r="4.1" fill="url(#s)"/><circle cx="175.9" cy="513.0" r="4.1" fill="url(#s)"/><circle cx="278.1" cy="481.6" r="4.1" fill="url(#s)"/><circle cx="319.1" cy="451.3" r="4.1" fill="url(#s)"/><circle cx="264.5" cy="519.4" r="4.1" fill="url(#s)"/><circle cx="306.3" cy="590.3" r="4.1" fill="url(#s)"/><circle cx="151.2" cy="591.8" r="4.1" fill="url(#s)"/><circle cx="170.7" cy="551.6" r="4.1" fill="url(#s)"/><circle cx="295.9" cy="426.0" r="4.1" fill="url(#s)"/><circle cx="281.1" cy="425.9" r="4.1" fill="url(#s)"/><circle cx="342.0" cy="477.1" r="4.1" fill="url(#s)"/><circle cx="302.0" cy="474.4" r="4.1" fill="url(#s)"/><circle cx="148.6" cy="494.6" r="4.1" fill="url(#s)"/><circle cx="208.9" cy="564.7" r="4.1" fill="url(#s)"/><circle cx="362.4" cy="615.2" r="4.1" fill="url(#s)"/><circle cx="235.9" cy="469.6" r="4.1" fill="url(#s)"/><circle cx="262.3" cy="652.4" r="4.1" fill="url(#s)"/><circle cx="403.2" cy="570.3" r="4.1" fill="url(#s)"/><circle cx="313.3" cy="429.2" r="4.1" fill="url(#s)"/><circle cx="377.5" cy="532.4" r="4.1" fill="url(#s)"/><circle cx="181.5" cy="466.3" r="4.1" fill="url(#s)"/><circle cx="241.0" cy="432.9" r="4.1" fill="url(#s)"/><circle cx="225.3" cy="611.1" r="4.1" fill="url(#s)"/><circle cx="243.9" cy="475.2" r="4.1" fill="url(#s)"/><circle cx="216.3" cy="502.4" r="4.1" fill="url(#s)"/><circle cx="290.6" cy="620.9" r="4.1" fill="url(#s)"/><circle cx="153.4" cy="512.2" r="4.1" fill="url(#s)"/><circle cx="151.9" cy="540.9" r="4.1" fill="url(#s)"/><circle cx="378.9" cy="558.8" r="4.1" fill="url(#s)"/><circle cx="321.6" cy="474.2" r="4.1" fill="url(#s)"/><circle cx="340.2" cy="550.7" r="4.1" fill="url(#s)"/><circle cx="354.2" cy="628.5" r="4.1" fill="url(#s)"/><circle cx="304.6" cy="609.8" r="4.1" fill="url(#s)"/><circle cx="403.1" cy="513.7" r="4.1" fill="url(#s)"/><circle cx="352.0" cy="602.1" r="4.1" fill="url(#s)"/><circle cx="242.4" cy="508.6" r="4.1" fill="url(#s)"/><circle cx="394.1" cy="496.6" r="4.1" fill="url(#s)"/><circle cx="337.2" cy="494.2" r="4.1" fill="url(#s)"/><circle cx="374.8" cy="600.1" r="4.1" fill="url(#s)"/><circle cx="186.1" cy="447.0" r="4.1" fill="url(#s)"/><circle cx="392.3" cy="570.1" r="4.1" fill="url(#s)"/><circle cx="250.8" cy="486.1" r="4.1" fill="url(#s)"/><circle cx="248.7" cy="448.1" r="4.1" fill="url(#s)"/><circle cx="193.9" cy="508.8" r="4.1" fill="url(#s)"/><circle cx="167.3" cy="615.9" r="4.1" fill="url(#s)"/><circle cx="367.6" cy="453.8" r="4.1" fill="url(#s)"/><circle cx="158.3" cy="480.9" r="4.1" fill="url(#s)"/><circle cx="236.3" cy="567.0" r="4.1" fill="url(#s)"/><circle cx="237.1" cy="491.2" r="4.1" fill="url(#s)"/><circle cx="223.2" cy="623.6" r="4.1" fill="url(#s)"/><circle cx="350.9" cy="578.3" r="4.1" fill="url(#s)"/><circle cx="181.5" cy="503.6" r="4.1" fill="url(#s)"/><circle cx="365.5" cy="505.8" r="4.1" fill="url(#s)"/><circle cx="288.8" cy="663.5" r="4.1" fill="url(#s)"/><circle cx="341.3" cy="440.4" r="4.1" fill="url(#s)"/><circle cx="268.9" cy="434.4" r="4.1" fill="url(#s)"/><circle cx="303.3" cy="570.9" r="4.1" fill="url(#s)"/><circle cx="205.8" cy="536.6" r="4.1" fill="url(#s)"/><circle cx="206.2" cy="638.3" r="4.1" fill="url(#s)"/><circle cx="351.2" cy="614.1" r="4.1" fill="url(#s)"/><circle cx="261.8" cy="568.3" r="4.1" fill="url(#s)"/><circle cx="261.9" cy="499.2" r="4.1" fill="url(#s)"/><circle cx="384.9" cy="473.9" r="4.1" fill="url(#s)"/><circle cx="275.1" cy="665.8" r="4.1" fill="url(#s)"/><circle cx="231.2" cy="557.2" r="4.1" fill="url(#s)"/><circle cx="308.5" cy="532.4" r="4.1" fill="url(#s)"/><circle cx="354.4" cy="459.3" r="4.1" fill="url(#s)"/><circle cx="358.1" cy="491.8" r="4.1" fill="url(#s)"/><circle cx="211.0" cy="598.1" r="4.1" fill="url(#s)"/><circle cx="169.6" cy="492.0" r="4.1" fill="url(#s)"/><circle cx="255.1" cy="581.2" r="4.1" fill="url(#s)"/><circle cx="198.4" cy="611.1" r="4.1" fill="url(#s)"/><circle cx="229.6" cy="526.7" r="4.1" fill="url(#s)"/><circle cx="385.3" cy="587.2" r="4.1" fill="url(#s)"/><circle cx="370.9" cy="546.3" r="4.1" fill="url(#s)"/><circle cx="227.6" cy="658.9" r="4.1" fill="url(#s)"/><circle cx="303.9" cy="463.7" r="4.1" fill="url(#s)"/><circle cx="337.9" cy="635.5" r="4.1" fill="url(#s)"/><circle cx="338.2" cy="532.5" r="4.1" fill="url(#s)"/><circle cx="249.4" cy="461.1" r="4.1" fill="url(#s)"/><circle cx="262.8" cy="444.5" r="4.1" fill="url(#s)"/><circle cx="345.9" cy="569.7" r="4.1" fill="url(#s)"/><circle cx="205.2" cy="494.8" r="4.1" fill="url(#s)"/><circle cx="234.7" cy="649.9" r="4.1" fill="url(#s)"/><circle cx="320.3" cy="441.6" r="4.1" fill="url(#s)"/><circle cx="234.5" cy="422.6" r="4.1" fill="url(#s)"/><circle cx="174.3" cy="565.1" r="4.1" fill="url(#s)"/><circle cx="390.6" cy="549.1" r="4.1" fill="url(#s)"/><circle cx="354.8" cy="532.4" r="4.1" fill="url(#s)"/><circle cx="198.6" cy="470.9" r="4.1" fill="url(#s)"/><circle cx="405.8" cy="532.4" r="4.1" fill="url(#s)"/><circle cx="219.1" cy="569.4" r="4.1" fill="url(#s)"/><circle cx="256.8" cy="620.7" r="4.1" fill="url(#s)"/><circle cx="254.0" cy="635.6" r="4.1" fill="url(#s)"/><circle cx="141.3" cy="561.5" r="4.1" fill="url(#s)"/><circle cx="144.6" cy="508.0" r="4.1" fill="url(#s)"/><circle cx="255.8" cy="522.1" r="4.1" fill="url(#s)"/><circle cx="399.8" cy="579.8" r="4.1" fill="url(#s)"/><circle cx="387.7" cy="537.6" r="4.1" fill="url(#s)"/><circle cx="214.1" cy="655.2" r="4.1" fill="url(#s)"/><circle cx="298.7" cy="531.9" r="4.1" fill="url(#s)"/><circle cx="175.3" cy="479.8" r="4.1" fill="url(#s)"/><circle cx="153.0" cy="562.6" r="4.1" fill="url(#s)"/><circle cx="302.1" cy="582.5" r="4.1" fill="url(#s)"/><circle cx="231.5" cy="630.2" r="4.1" fill="url(#s)"/><circle cx="253.2" cy="663.2" r="4.1" fill="url(#s)"/><circle cx="282.2" cy="585.4" r="4.1" fill="url(#s)"/><circle cx="284.7" cy="601.5" r="4.1" fill="url(#s)"/><circle cx="305.2" cy="659.4" r="4.1" fill="url(#s)"/><circle cx="195.7" cy="484.5" r="4.1" fill="url(#s)"/><circle cx="281.3" cy="501.3" r="4.1" fill="url(#s)"/><circle cx="283.0" cy="468.7" r="4.1" fill="url(#s)"/><circle cx="167.9" cy="597.7" r="4.1" fill="url(#s)"/><circle cx="331.4" cy="444.3" r="4.1" fill="url(#s)"/><circle cx="363.4" cy="633.9" r="4.1" fill="url(#s)"/><circle cx="269.5" cy="548.7" r="4.1" fill="url(#s)"/><circle cx="216.7" cy="438.4" r="4.1" fill="url(#s)"/><circle cx="252.9" cy="562.0" r="4.1" fill="url(#s)"/><circle cx="367.2" cy="482.9" r="4.1" fill="url(#s)"/><circle cx="367.9" cy="607.6" r="4.1" fill="url(#s)"/><circle cx="154.9" cy="550.0" r="4.1" fill="url(#s)"/><circle cx="293.5" cy="560.8" r="4.1" fill="url(#s)"/><circle cx="286.3" cy="525.1" r="4.1" fill="url(#s)"/><circle cx="277.7" cy="416.1" r="4.1" fill="url(#s)"/><circle cx="178.3" cy="630.1" r="4.1" fill="url(#s)"/><circle cx="314.7" cy="524.3" r="4.1" fill="url(#s)"/><circle cx="372.8" cy="517.8" r="4.1" fill="url(#s)"/><circle cx="147.0" cy="582.4" r="4.1" fill="url(#s)"/><circle cx="223.3" cy="546.1" r="4.1" fill="url(#s)"/><circle cx="199.8" cy="571.4" r="4.1" fill="url(#s)"/><circle cx="171.8" cy="459.2" r="4.1" fill="url(#s)"/><circle cx="388.8" cy="559.1" r="4.1" fill="url(#s)"/><circle cx="305.2" cy="453.7" r="4.1" fill="url(#s)"/><circle cx="178.7" cy="574.3" r="4.1" fill="url(#s)"/><circle cx="324.5" cy="582.0" r="4.1" fill="url(#s)"/><circle cx="211.0" cy="526.3" r="4.1" fill="url(#s)"/><circle cx="196.1" cy="550.6" r="4.1" fill="url(#s)"/><circle cx="385.6" cy="514.0" r="4.1" fill="url(#s)"/><circle cx="403.7" cy="557.4" r="4.1" fill="url(#s)"/><circle cx="329.9" cy="652.3" r="4.1" fill="url(#s)"/><circle cx="292.4" cy="548.7" r="4.1" fill="url(#s)"/><circle cx="354.3" cy="442.4" r="4.1" fill="url(#s)"/><circle cx="315.5" cy="589.8" r="4.1" fill="url(#s)"/><circle cx="277.3" cy="554.7" r="4.1" fill="url(#s)"/><circle cx="223.6" cy="634.6" r="4.1" fill="url(#s)"/><circle cx="208.1" cy="449.7" r="4.1" fill="url(#s)"/><circle cx="287.2" cy="456.5" r="4.1" fill="url(#s)"/><circle cx="342.8" cy="450.9" r="4.1" fill="url(#s)"/><circle cx="279.5" cy="638.0" r="4.1" fill="url(#s)"/><circle cx="297.0" cy="599.7" r="4.1" fill="url(#s)"/><circle cx="328.2" cy="557.0" r="4.1" fill="url(#s)"/><circle cx="321.4" cy="538.3" r="4.1" fill="url(#s)"/><circle cx="384.5" cy="606.0" r="4.1" fill="url(#s)"/><circle cx="338.8" cy="589.3" r="4.1" fill="url(#s)"/><circle cx="222.8" cy="428.4" r="4.1" fill="url(#s)"/><circle cx="276.3" cy="623.9" r="4.1" fill="url(#s)"/><circle cx="316.3" cy="628.5" r="4.1" fill="url(#s)"/><circle cx="299.1" cy="628.7" r="4.1" fill="url(#s)"/><circle cx="199.0" cy="585.1" r="4.1" fill="url(#s)"/><circle cx="333.3" cy="483.4" r="4.1" fill="url(#s)"/><circle cx="404.4" cy="523.6" r="4.1" fill="url(#s)"/><circle cx="374.6" cy="590.3" r="4.1" fill="url(#s)"/><circle cx="245.5" cy="570.0" r="4.1" fill="url(#s)"/><circle cx="259.2" cy="430.1" r="4.1" fill="url(#s)"/><circle cx="184.5" cy="622.7" r="4.1" fill="url(#s)"/><circle cx="330.1" cy="516.1" r="4.1" fill="url(#s)"/><circle cx="213.9" cy="620.2" r="4.1" fill="url(#s)"/><circle cx="269.1" cy="587.1" r="4.1" fill="url(#s)"/><circle cx="313.5" cy="618.2" r="4.1" fill="url(#s)"/><circle cx="376.4" cy="464.4" r="4.1" fill="url(#s)"/><circle cx="229.3" cy="459.8" r="4.1" fill="url(#s)"/><circle cx="394.7" cy="588.7" r="4.1" fill="url(#s)"/><circle cx="315.7" cy="491.4" r="4.1" fill="url(#s)"/><circle cx="327.0" cy="573.1" r="4.1" fill="url(#s)"/><circle cx="278.1" cy="516.1" r="4.1" fill="url(#s)"/><circle cx="224.5" cy="600.7" r="4.1" fill="url(#s)"/><circle cx="354.2" cy="561.5" r="4.1" fill="url(#s)"/><circle cx="246.9" cy="554.3" r="4.1" fill="url(#s)"/><circle cx="388.5" cy="487.5" r="4.1" fill="url(#s)"/><circle cx="212.1" cy="470.9" r="4.1" fill="url(#s)"/><circle cx="279.7" cy="533.1" r="4.1" fill="url(#s)"/><circle cx="286.8" cy="416.6" r="4.1" fill="url(#s)"/><circle cx="211.6" cy="431.0" r="4.1" fill="url(#s)"/><circle cx="356.1" cy="639.5" r="4.1" fill="url(#s)"/><circle cx="301.3" cy="434.4" r="4.1" fill="url(#s)"/><circle cx="264.2" cy="468.1" r="4.1" fill="url(#s)"/><circle cx="242.8" cy="664.8" r="4.1" fill="url(#s)"/><circle cx="143.4" cy="526.5" r="4.1" fill="url(#s)"/><circle cx="337.7" cy="615.8" r="4.1" fill="url(#s)"/><circle cx="318.0" cy="549.3" r="4.1" fill="url(#s)"/><circle cx="170.3" cy="468.6" r="4.1" fill="url(#s)"/><circle cx="159.1" cy="572.1" r="4.1" fill="url(#s)"/><circle cx="190.6" cy="591.6" r="4.1" fill="url(#s)"/><circle cx="232.8" cy="515.9" r="4.1" fill="url(#s)"/><circle cx="238.8" cy="450.9" r="4.1" fill="url(#s)"/><circle cx="189.8" cy="544.4" r="4.1" fill="url(#s)"/><circle cx="226.0" cy="442.2" r="4.1" fill="url(#s)"/><circle cx="268.6" cy="459.6" r="4.1" fill="url(#s)"/><circle cx="359.7" cy="546.2" r="4.1" fill="url(#s)"/><circle cx="246.4" cy="651.6" r="4.1" fill="url(#s)"/><circle cx="291.8" cy="500.5" r="4.1" fill="url(#s)"/><circle cx="325.3" cy="465.7" r="4.1" fill="url(#s)"/><circle cx="345.6" cy="497.2" r="4.1" fill="url(#s)"/><circle cx="210.2" cy="588.6" r="4.1" fill="url(#s)"/><circle cx="289.2" cy="593.7" r="4.1" fill="url(#s)"/><circle cx="245.2" cy="539.2" r="4.1" fill="url(#s)"/><circle cx="370.2" cy="526.7" r="4.1" fill="url(#s)"/><circle cx="143.0" cy="571.8" r="4.1" fill="url(#s)"/><circle cx="287.3" cy="447.5" r="4.1" fill="url(#s)"/><circle cx="220.1" cy="579.7" r="4.1" fill="url(#s)"/><circle cx="288.8" cy="654.3" r="4.1" fill="url(#s)"/><circle cx="322.8" cy="483.4" r="4.1" fill="url(#s)"/><circle cx="262.6" cy="638.1" r="4.1" fill="url(#s)"/><circle cx="270.5" cy="655.9" r="4.1" fill="url(#s)"/><circle cx="370.1" cy="627.6" r="4.1" fill="url(#s)"/><circle cx="321.0" cy="424.5" r="4.1" fill="url(#s)"/><circle cx="323.2" cy="658.7" r="4.1" fill="url(#s)"/><circle cx="369.1" cy="580.4" r="4.1" fill="url(#s)"/><circle cx="345.4" cy="648.0" r="4.1" fill="url(#s)"/><circle cx="298.8" cy="617.8" r="4.1" fill="url(#s)"/><circle cx="388.3" cy="504.5" r="4.1" fill="url(#s)"/><circle cx="367.8" cy="565.4" r="4.1" fill="url(#s)"/><circle cx="326.3" cy="505.1" r="4.1" fill="url(#s)"/><circle cx="197.7" cy="634.5" r="4.1" fill="url(#s)"/><circle cx="181.6" cy="583.7" r="4.1" fill="url(#s)"/><circle cx="182.5" cy="536.6" r="4.1" fill="url(#s)"/><circle cx="399.7" cy="503.7" r="4.1" fill="url(#s)"/><circle cx="237.9" cy="623.9" r="4.1" fill="url(#s)"/><circle cx="291.1" cy="582.6" r="4.1" fill="url(#s)"/><circle cx="226.8" cy="643.7" r="4.1" fill="url(#s)"/><circle cx="179.6" cy="557.0" r="4.1" fill="url(#s)"/><circle cx="328.4" cy="603.9" r="4.1" fill="url(#s)"/><circle cx="241.0" cy="633.9" r="4.1" fill="url(#s)"/><circle cx="181.9" cy="519.7" r="4.1" fill="url(#s)"/><circle cx="198.4" cy="437.2" r="4.1" fill="url(#s)"/><circle cx="237.6" cy="575.9" r="4.1" fill="url(#s)"/><circle cx="300.7" cy="640.1" r="4.1" fill="url(#s)"/><circle cx="406.2" cy="541.2" r="4.1" fill="url(#s)"/><circle cx="158.6" cy="597.2" r="4.1" fill="url(#s)"/><circle cx="245.7" cy="602.9" r="4.1" fill="url(#s)"/><circle cx="251.9" cy="417.3" r="4.1" fill="url(#s)"/><circle cx="345.3" cy="513.6" r="4.1" fill="url(#s)"/><circle cx="234.4" cy="612.8" r="4.1" fill="url(#s)"/><circle cx="243.0" cy="419.6" r="4.1" fill="url(#s)"/><circle cx="353.7" cy="483.6" r="4.1" fill="url(#s)"/><circle cx="227.6" cy="535.6" r="4.1" fill="url(#s)"/><circle cx="291.2" cy="465.0" r="4.1" fill="url(#s)"/><circle cx="167.1" cy="483.0" r="4.1" fill="url(#s)"/></g>
</g>
<ellipse cx="272.7" cy="542.2" rx="139.8" ry="132.1" fill="none" stroke="#d0d0d0" stroke-width=".9" stroke-dasharray="8 6" opacity=".5"/>
<ellipse cx="272.7" cy="542.0" rx="136.0" ry="128.1" fill="none" stroke="#3a3a3a" stroke-width="1.1"/>
<polygon points="235.500,378.500 238,386 300,399 372,415 377,413 378,404 340,396 290,386" fill="#6a6a6a" stroke="#383838" stroke-width=".8"/>
<g transform="translate(318.2 334.0)"><circle r="13.6" fill="#8a8a8a" stroke="#4a4a4a" stroke-width=".8"/><circle r="10.6" fill="none" stroke="#c6c6c6" stroke-width="2.6"/><circle r="7.4" fill="#8c8c8c" stroke="#505050" stroke-width="1"/><circle r="5.6" fill="#bcbcbc"/><circle r="4.2" fill="#c8c8fc" stroke="#3c3c3c" stroke-width=".9"/></g>
<clipPath id="tb"><polygon points="236.0,376.0 243.5,366.0 255.5,352.5 271.0,345.5 289.0,342.5 303.0,340.5 318.0,341.0 331.0,348.0 346.5,355.5 360.0,364.5 371.5,378.0 377.0,391.5 377.5,402.0 372.0,405.5 335.0,397.0 290.0,386.5 238.0,377.5"/></clipPath>
<polygon points="236.0,376.0 243.5,366.0 255.5,352.5 271.0,345.5 289.0,342.5 303.0,340.5 318.0,341.0 331.0,348.0 346.5,355.5 360.0,364.5 371.5,378.0 377.0,391.5 377.5,402.0 372.0,405.5 335.0,397.0 290.0,386.5 238.0,377.5" fill="#585858"/>
<circle cx="324.1" cy="388.7" r="7.8" fill="url(#c)" stroke="#242424" stroke-width=".8"/><circle cx="324.1" cy="388.7" r="7.2" fill="url(#cs)"/><circle cx="369.4" cy="388.6" r="8.1" fill="url(#c)" stroke="#242424" stroke-width=".8"/><circle cx="369.4" cy="388.6" r="7.5" fill="url(#cs)"/><circle cx="302.4" cy="356.5" r="7.3" fill="url(#c)" stroke="#242424" stroke-width=".8"/><circle cx="302.4" cy="356.5" r="6.7" fill="url(#cs)"/><circle cx="266.7" cy="358.7" r="8.1" fill="url(#c)" stroke="#242424" stroke-width=".8"/><circle cx="266.7" cy="358.7" r="7.5" fill="url(#cs)"/><circle cx="323.4" cy="348.7" r="6.0" fill="url(#c)" stroke="#242424" stroke-width=".8"/><circle cx="323.4" cy="348.7" r="5.4" fill="url(#cs)"/><circle cx="331.9" cy="362.5" r="6.7" fill="url(#c)" stroke="#242424" stroke-width=".8"/><circle cx="331.9" cy="362.5" r="6.1" fill="url(#cs)"/><circle cx="351.8" cy="371.7" r="6.7" fill="url(#c)" stroke="#242424" stroke-width=".8"/><circle cx="351.8" cy="371.7" r="6.1" fill="url(#cs)"/><circle cx="286.2" cy="374.6" r="7.8" fill="url(#c)" stroke="#242424" stroke-width=".8"/><circle cx="286.2" cy="374.6" r="7.2" fill="url(#cs)"/><circle cx="348.8" cy="396.4" r="6.1" fill="url(#c)" stroke="#242424" stroke-width=".8"/><circle cx="348.8" cy="396.4" r="5.5" fill="url(#cs)"/><circle cx="269.6" cy="379.1" r="7.9" fill="url(#c)" stroke="#242424" stroke-width=".8"/><circle cx="269.6" cy="379.1" r="7.3" fill="url(#cs)"/><circle cx="251.1" cy="368.7" r="6.3" fill="url(#c)" stroke="#242424" stroke-width=".8"/><circle cx="251.1" cy="368.7" r="5.7" fill="url(#cs)"/><circle cx="303.5" cy="385.4" r="7.7" fill="url(#c)" stroke="#242424" stroke-width=".8"/><circle cx="303.5" cy="385.4" r="7.1" fill="url(#cs)"/><circle cx="280.9" cy="352.3" r="6.4" fill="url(#c)" stroke="#242424" stroke-width=".8"/><circle cx="280.9" cy="352.3" r="5.8" fill="url(#cs)"/><circle cx="311.0" cy="370.7" r="6.8" fill="url(#c)" stroke="#242424" stroke-width=".8"/><circle cx="311.0" cy="370.7" r="6.2" fill="url(#cs)"/><circle cx="338.0" cy="380.2" r="7.4" fill="url(#c)" stroke="#242424" stroke-width=".8"/><circle cx="338.0" cy="380.2" r="6.8" fill="url(#cs)"/><g stroke="#2a2a2a" stroke-width=".7"><circle cx="274.9" cy="371.5" r="3.8" fill="url(#s)"/><circle cx="319.3" cy="356.0" r="3.8" fill="url(#s)"/><circle cx="259.5" cy="377.6" r="3.8" fill="url(#s)"/><circle cx="359.4" cy="376.5" r="3.8" fill="url(#s)"/><circle cx="275.2" cy="347.0" r="3.8" fill="url(#s)"/><circle cx="308.1" cy="378.1" r="3.8" fill="url(#s)"/><circle cx="251.6" cy="376.8" r="3.8" fill="url(#s)"/><circle cx="351.6" cy="382.1" r="3.8" fill="url(#s)"/><circle cx="339.3" cy="393.7" r="3.8" fill="url(#s)"/><circle cx="300.6" cy="373.4" r="3.8" fill="url(#s)"/><circle cx="333.1" cy="351.6" r="3.8" fill="url(#s)"/><circle cx="344.9" cy="385.6" r="3.8" fill="url(#s)"/><circle cx="359.2" cy="399.9" r="3.8" fill="url(#s)"/><circle cx="370.6" cy="397.5" r="3.8" fill="url(#s)"/><circle cx="294.8" cy="380.5" r="3.8" fill="url(#s)"/><circle cx="342.9" cy="371.1" r="3.8" fill="url(#s)"/><circle cx="311.9" cy="355.3" r="3.8" fill="url(#s)"/><circle cx="282.3" cy="362.4" r="3.8" fill="url(#s)"/><circle cx="298.5" cy="343.1" r="3.8" fill="url(#s)"/><circle cx="259.6" cy="353.4" r="3.8" fill="url(#s)"/><circle cx="350.9" cy="363.5" r="3.8" fill="url(#s)"/><circle cx="303.5" cy="366.4" r="3.8" fill="url(#s)"/><circle cx="291.5" cy="351.5" r="3.8" fill="url(#s)"/><circle cx="241.0" cy="376.3" r="3.8" fill="url(#s)"/><circle cx="330.3" cy="371.2" r="3.8" fill="url(#s)"/><circle cx="285.8" cy="345.4" r="3.8" fill="url(#s)"/><circle cx="294.9" cy="359.7" r="3.8" fill="url(#s)"/><circle cx="314.5" cy="346.8" r="3.8" fill="url(#s)"/><circle cx="340.7" cy="362.0" r="3.8" fill="url(#s)"/><circle cx="319.2" cy="375.1" r="3.8" fill="url(#s)"/><circle cx="304.5" cy="348.2" r="3.8" fill="url(#s)"/><circle cx="281.9" cy="383.2" r="3.8" fill="url(#s)"/><circle cx="358.8" cy="385.7" r="3.8" fill="url(#s)"/><circle cx="328.8" cy="381.3" r="3.8" fill="url(#s)"/><circle cx="312.4" cy="385.7" r="3.8" fill="url(#s)"/><circle cx="354.6" cy="392.0" r="3.8" fill="url(#s)"/><circle cx="259.7" cy="364.0" r="3.8" fill="url(#s)"/><circle cx="318.0" cy="364.7" r="3.8" fill="url(#s)"/><circle cx="265.7" cy="368.8" r="3.8" fill="url(#s)"/><circle cx="291.2" cy="366.5" r="3.8" fill="url(#s)"/><circle cx="367.7" cy="377.2" r="3.8" fill="url(#s)"/><circle cx="361.8" cy="369.2" r="3.8" fill="url(#s)"/><circle cx="243.0" cy="369.2" r="3.8" fill="url(#s)"/><circle cx="252.0" cy="359.0" r="3.8" fill="url(#s)"/><circle cx="267.5" cy="349.1" r="3.8" fill="url(#s)"/><circle cx="331.9" cy="392.4" r="3.8" fill="url(#s)"/><circle cx="275.5" cy="358.1" r="3.8" fill="url(#s)"/><circle cx="326.9" cy="356.5" r="3.8" fill="url(#s)"/><circle cx="310.4" cy="362.9" r="3.8" fill="url(#s)"/><circle cx="340.5" cy="354.4" r="3.8" fill="url(#s)"/></g>
<circle cx="235.6" cy="376.3" r="3.5" fill="url(#s)"/>
<circle cx="243.0" cy="366.4" r="3.5" fill="url(#s)"/>
<circle cx="250.0" cy="359.1" r="3.5" fill="url(#s)"/>
<circle cx="256.3" cy="352.6" r="3.1" fill="url(#s)"/>
<circle cx="262.5" cy="349.9" r="3.4" fill="url(#s)"/>
<circle cx="270.5" cy="346.4" r="3.3" fill="url(#s)"/>
<circle cx="279.8" cy="343.1" r="3.8" fill="url(#s)"/>
<circle cx="289.5" cy="342.6" r="3.5" fill="url(#s)"/>
<circle cx="296.5" cy="341.3" r="3.8" fill="url(#s)"/>
<circle cx="303.5" cy="340.7" r="3.3" fill="url(#s)"/>
<circle cx="310.6" cy="339.9" r="3.2" fill="url(#s)"/>
<circle cx="318.1" cy="340.8" r="3.4" fill="url(#s)"/>
<circle cx="325.3" cy="343.9" r="3.6" fill="url(#s)"/>
<circle cx="330.9" cy="347.3" r="3.5" fill="url(#s)"/>
<circle cx="338.9" cy="352.6" r="3.8" fill="url(#s)"/>
<circle cx="346.5" cy="355.8" r="3.5" fill="url(#s)"/>
<circle cx="353.6" cy="360.0" r="3.3" fill="url(#s)"/>
<circle cx="359.6" cy="364.8" r="3.1" fill="url(#s)"/>
<circle cx="366.4" cy="370.7" r="3.3" fill="url(#s)"/>
<circle cx="372.0" cy="377.6" r="3.4" fill="url(#s)"/>
<circle cx="374.7" cy="384.7" r="3.2" fill="url(#s)"/>
<circle cx="377.6" cy="390.5" r="3.8" fill="url(#s)"/>
<polygon points="146.300,426 148,428.500 94.500,551.500 91,550" fill="#2a2a2a"/><polygon points="144.800,428 146.500,429.500 93.600,550.500 91.800,549.500" fill="#d4d4d4"/>
<g transform="translate(59.0 460.0)"><circle r="13.6" fill="#8a8a8a" stroke="#4a4a4a" stroke-width=".8"/><circle r="10.6" fill="none" stroke="#c6c6c6" stroke-width="2.6"/><circle r="7.4" fill="#8c8c8c" stroke="#505050" stroke-width="1"/><circle r="5.6" fill="#bcbcbc"/><circle r="4.2" fill="#c8c8fc" stroke="#3c3c3c" stroke-width=".9"/></g>
<clipPath id="lb"><polygon points="143.5,428.5 140.0,421.5 130.0,419.5 114.5,421.5 101.0,425.5 91.5,432.0 83.0,439.5 75.5,448.0 68.0,466.0 62.0,480.0 58.5,493.0 59.5,506.0 65.0,519.5 72.0,531.0 80.0,539.5 91.0,547.0"/></clipPath>
<polygon points="143.5,428.5 140.0,421.5 130.0,419.5 114.5,421.5 101.0,425.5 91.5,432.0 83.0,439.5 75.5,448.0 68.0,466.0 62.0,480.0 58.5,493.0 59.5,506.0 65.0,519.5 72.0,531.0 80.0,539.5 91.0,547.0" fill="#585858"/>
<circle cx="97.9" cy="467.1" r="6.3" fill="url(#c)" stroke="#242424" stroke-width=".8"/><circle cx="97.9" cy="467.1" r="5.7" fill="url(#cs)"/><circle cx="65.4" cy="490.2" r="7.4" fill="url(#c)" stroke="#242424" stroke-width=".8"/><circle cx="65.4" cy="490.2" r="6.8" fill="url(#cs)"/><circle cx="120.1" cy="439.5" r="6.5" fill="url(#c)" stroke="#242424" stroke-width=".8"/><circle cx="120.1" cy="439.5" r="5.9" fill="url(#cs)"/><circle cx="83.3" cy="505.5" r="7.7" fill="url(#c)" stroke="#242424" stroke-width=".8"/><circle cx="83.3" cy="505.5" r="7.1" fill="url(#cs)"/><circle cx="82.4" cy="522.7" r="6.5" fill="url(#c)" stroke="#242424" stroke-width=".8"/><circle cx="82.4" cy="522.7" r="5.9" fill="url(#cs)"/><circle cx="105.7" cy="496.8" r="6.3" fill="url(#c)" stroke="#242424" stroke-width=".8"/><circle cx="105.7" cy="496.8" r="5.7" fill="url(#cs)"/><circle cx="95.4" cy="446.7" r="7.0" fill="url(#c)" stroke="#242424" stroke-width=".8"/><circle cx="95.4" cy="446.7" r="6.4" fill="url(#cs)"/><circle cx="67.3" cy="508.7" r="7.0" fill="url(#c)" stroke="#242424" stroke-width=".8"/><circle cx="67.3" cy="508.7" r="6.4" fill="url(#cs)"/><circle cx="132.9" cy="424.1" r="7.4" fill="url(#c)" stroke="#242424" stroke-width=".8"/><circle cx="132.9" cy="424.1" r="6.8" fill="url(#cs)"/><circle cx="124.4" cy="462.1" r="7.8" fill="url(#c)" stroke="#242424" stroke-width=".8"/><circle cx="124.4" cy="462.1" r="7.2" fill="url(#cs)"/><circle cx="78.6" cy="452.2" r="7.2" fill="url(#c)" stroke="#242424" stroke-width=".8"/><circle cx="78.6" cy="452.2" r="6.6" fill="url(#cs)"/><circle cx="75.3" cy="475.5" r="8.2" fill="url(#c)" stroke="#242424" stroke-width=".8"/><circle cx="75.3" cy="475.5" r="7.6" fill="url(#cs)"/><circle cx="102.2" cy="432.1" r="7.6" fill="url(#c)" stroke="#242424" stroke-width=".8"/><circle cx="102.2" cy="432.1" r="7.0" fill="url(#cs)"/><circle cx="88.9" cy="490.6" r="7.6" fill="url(#c)" stroke="#242424" stroke-width=".8"/><circle cx="88.9" cy="490.6" r="7.0" fill="url(#cs)"/><circle cx="113.3" cy="473.4" r="6.0" fill="url(#c)" stroke="#242424" stroke-width=".8"/><circle cx="113.3" cy="473.4" r="5.4" fill="url(#cs)"/><circle cx="88.9" cy="538.1" r="6.2" fill="url(#c)" stroke="#242424" stroke-width=".8"/><circle cx="88.9" cy="538.1" r="5.6" fill="url(#cs)"/><circle cx="96.9" cy="516.9" r="6.1" fill="url(#c)" stroke="#242424" stroke-width=".8"/><circle cx="96.9" cy="516.9" r="5.5" fill="url(#cs)"/><circle cx="110.7" cy="453.9" r="6.0" fill="url(#c)" stroke="#242424" stroke-width=".8"/><circle cx="110.7" cy="453.9" r="5.4" fill="url(#cs)"/><g stroke="#2a2a2a" stroke-width=".7"><circle cx="115.3" cy="465.3" r="3.8" fill="url(#s)"/><circle cx="99.3" cy="456.1" r="3.8" fill="url(#s)"/><circle cx="113.0" cy="445.7" r="3.8" fill="url(#s)"/><circle cx="99.9" cy="490.2" r="3.8" fill="url(#s)"/><circle cx="77.6" cy="512.5" r="3.8" fill="url(#s)"/><circle cx="90.7" cy="513.3" r="3.8" fill="url(#s)"/><circle cx="92.8" cy="526.0" r="3.8" fill="url(#s)"/><circle cx="88.7" cy="460.1" r="3.8" fill="url(#s)"/><circle cx="123.3" cy="431.5" r="3.8" fill="url(#s)"/><circle cx="121.4" cy="470.0" r="3.8" fill="url(#s)"/><circle cx="140.5" cy="429.6" r="3.8" fill="url(#s)"/><circle cx="113.6" cy="487.8" r="3.8" fill="url(#s)"/><circle cx="81.7" cy="533.2" r="3.8" fill="url(#s)"/><circle cx="120.4" cy="451.7" r="3.8" fill="url(#s)"/><circle cx="78.4" cy="465.8" r="3.8" fill="url(#s)"/><circle cx="128.7" cy="445.3" r="3.8" fill="url(#s)"/><circle cx="106.3" cy="473.4" r="3.8" fill="url(#s)"/><circle cx="69.0" cy="500.1" r="3.8" fill="url(#s)"/><circle cx="65.5" cy="477.1" r="3.8" fill="url(#s)"/><circle cx="92.2" cy="434.7" r="3.8" fill="url(#s)"/><circle cx="136.4" cy="440.6" r="3.8" fill="url(#s)"/><circle cx="82.3" cy="445.2" r="3.8" fill="url(#s)"/><circle cx="73.7" cy="521.0" r="3.8" fill="url(#s)"/><circle cx="84.2" cy="479.7" r="3.8" fill="url(#s)"/><circle cx="132.3" cy="433.2" r="3.8" fill="url(#s)"/><circle cx="73.0" cy="485.9" r="3.8" fill="url(#s)"/><circle cx="78.9" cy="491.1" r="3.8" fill="url(#s)"/><circle cx="117.9" cy="481.1" r="3.8" fill="url(#s)"/><circle cx="88.6" cy="473.5" r="3.8" fill="url(#s)"/><circle cx="103.4" cy="483.4" r="3.8" fill="url(#s)"/><circle cx="75.4" cy="528.6" r="3.8" fill="url(#s)"/><circle cx="103.2" cy="446.0" r="3.8" fill="url(#s)"/><circle cx="96.3" cy="504.4" r="3.8" fill="url(#s)"/><circle cx="91.6" cy="481.4" r="3.8" fill="url(#s)"/><circle cx="115.2" cy="424.3" r="3.8" fill="url(#s)"/><circle cx="97.7" cy="474.9" r="3.8" fill="url(#s)"/><circle cx="107.6" cy="425.7" r="3.8" fill="url(#s)"/><circle cx="130.3" cy="453.4" r="3.8" fill="url(#s)"/><circle cx="102.5" cy="511.1" r="3.8" fill="url(#s)"/><circle cx="108.6" cy="462.1" r="3.8" fill="url(#s)"/><circle cx="104.5" cy="503.7" r="3.8" fill="url(#s)"/><circle cx="66.5" cy="516.8" r="3.8" fill="url(#s)"/><circle cx="111.3" cy="436.2" r="3.8" fill="url(#s)"/><circle cx="89.1" cy="441.8" r="3.8" fill="url(#s)"/><circle cx="86.6" cy="452.5" r="3.8" fill="url(#s)"/><circle cx="94.7" cy="533.5" r="3.8" fill="url(#s)"/><circle cx="61.8" cy="497.4" r="3.8" fill="url(#s)"/><circle cx="70.6" cy="465.2" r="3.8" fill="url(#s)"/><circle cx="76.9" cy="499.1" r="3.8" fill="url(#s)"/><circle cx="123.1" cy="422.9" r="3.8" fill="url(#s)"/><circle cx="75.0" cy="459.1" r="3.8" fill="url(#s)"/><circle cx="98.5" cy="439.6" r="3.8" fill="url(#s)"/><circle cx="94.4" cy="497.1" r="3.8" fill="url(#s)"/><circle cx="110.2" cy="480.0" r="3.8" fill="url(#s)"/><circle cx="99.9" cy="523.2" r="3.8" fill="url(#s)"/></g>
<circle cx="143.5" cy="428.5" r="3.3" fill="url(#s)"/>
<circle cx="139.6" cy="420.6" r="3.3" fill="url(#s)"/>
<circle cx="130.1" cy="420.3" r="3.6" fill="url(#s)"/>
<circle cx="122.8" cy="419.9" r="3.5" fill="url(#s)"/>
<circle cx="115.3" cy="420.9" r="3.3" fill="url(#s)"/>
<circle cx="108.0" cy="423.3" r="3.4" fill="url(#s)"/>
<circle cx="100.9" cy="426.4" r="3.5" fill="url(#s)"/>
<circle cx="91.9" cy="431.8" r="3.9" fill="url(#s)"/>
<circle cx="82.1" cy="439.3" r="3.8" fill="url(#s)"/>
<circle cx="75.9" cy="448.0" r="3.8" fill="url(#s)"/>
<circle cx="73.4" cy="454.5" r="3.6" fill="url(#s)"/>
<circle cx="70.2" cy="459.7" r="3.0" fill="url(#s)"/>
<circle cx="67.9" cy="465.1" r="3.4" fill="url(#s)"/>
<circle cx="64.5" cy="473.4" r="3.5" fill="url(#s)"/>
<circle cx="61.1" cy="480.0" r="3.5" fill="url(#s)"/>
<circle cx="60.5" cy="485.7" r="3.7" fill="url(#s)"/>
<circle cx="59.4" cy="492.1" r="3.6" fill="url(#s)"/>
<circle cx="59.5" cy="499.0" r="3.0" fill="url(#s)"/>
<circle cx="59.0" cy="505.4" r="3.7" fill="url(#s)"/>
<circle cx="62.3" cy="512.4" r="3.3" fill="url(#s)"/>
<circle cx="65.9" cy="519.8" r="3.2" fill="url(#s)"/>
<circle cx="68.6" cy="524.4" r="3.3" fill="url(#s)"/>
<circle cx="71.2" cy="531.5" r="3.7" fill="url(#s)"/>
<circle cx="80.1" cy="540.3" r="3.6" fill="url(#s)"/>
<circle cx="86.2" cy="542.3" r="3.2" fill="url(#s)"/>
<circle cx="355" cy="417.3" r="3.4" fill="#10e010" stroke="#0a8a0a" stroke-width=".8"/>
<rect x="550.3" y="308.5" width="13" height="11" fill="#6c6c6c" stroke="#4a4a4a" stroke-width=".5" transform="rotate(88.6 556.8 314.0)"/>
<rect x="558.9" y="318.1" width="43.7" height="13.5" rx="4.9" fill="url(#cy)" transform="rotate(-91.4 558.9 324.9)"/>
<rect x="603.9" y="325.3" width="13" height="11" fill="#6c6c6c" stroke="#4a4a4a" stroke-width=".5" transform="rotate(-54.0 610.4 330.8)"/>
<rect x="598.2" y="331.9" width="46.5" height="13.5" rx="4.9" fill="url(#cy)" transform="rotate(-54.0 598.2 338.6)"/>
<rect x="643.1" y="364.6" width="13" height="11" fill="#6c6c6c" stroke="#4a4a4a" stroke-width=".5" transform="rotate(-25.0 649.6 370.1)"/>
<rect x="630.6" y="361.9" width="45.2" height="13.5" rx="4.9" fill="url(#cy)" transform="rotate(-25.0 630.6 368.6)"/>
<rect x="655.1" y="417.5" width="13" height="11" fill="#6c6c6c" stroke="#4a4a4a" stroke-width=".5" transform="rotate(0.0 661.6 423.0)"/>
<rect x="640.9" y="405.2" width="44.4" height="13.5" rx="4.9" fill="url(#cy)" transform="rotate(0.0 640.9 412.0)"/>
<rect x="638.9" y="467.9" width="13" height="11" fill="#6c6c6c" stroke="#4a4a4a" stroke-width=".5" transform="rotate(29.5 645.4 473.4)"/>
<rect x="627.2" y="444.6" width="45.1" height="13.5" rx="4.9" fill="url(#cy)" transform="rotate(29.5 627.2 451.3)"/>
<rect x="597.9" y="502.9" width="13" height="11" fill="#6c6c6c" stroke="#4a4a4a" stroke-width=".5" transform="rotate(53.0 604.4 508.4)"/>
<rect x="593.0" y="473.6" width="42.7" height="13.5" rx="4.9" fill="url(#cy)" transform="rotate(53.0 593.0 480.4)"/>
<rect x="542.3" y="514.0" width="13" height="11" fill="#6c6c6c" stroke="#4a4a4a" stroke-width=".5" transform="rotate(92.7 548.8 519.5)"/>
<rect x="549.3" y="523.1" width="42.7" height="13.5" rx="4.9" fill="url(#cy)" transform="rotate(-87.3 549.3 529.9)"/>
<rect x="488.5" y="496.9" width="13" height="11" fill="#6c6c6c" stroke="#4a4a4a" stroke-width=".5" transform="rotate(125.5 495.0 502.4)"/>
<rect x="483.7" y="502.6" width="44.1" height="13.5" rx="4.9" fill="url(#cy)" transform="rotate(-54.5 483.7 509.4)"/>
<rect x="450.5" y="456.5" width="13" height="11" fill="#6c6c6c" stroke="#4a4a4a" stroke-width=".5" transform="rotate(152.3 457.0 462.0)"/>
<rect x="438.3" y="454.9" width="45.5" height="13.5" rx="4.9" fill="url(#cy)" transform="rotate(-27.7 438.3 461.6)"/>
<rect x="438.1" y="405.2" width="13" height="11" fill="#6c6c6c" stroke="#4a4a4a" stroke-width=".5" transform="rotate(0.9 444.6 410.8)"/>
<rect x="423.9" y="392.6" width="44.4" height="13.5" rx="4.9" fill="url(#cy)" transform="rotate(0.9 423.9 399.4)"/>
<rect x="454.4" y="354.4" width="13" height="11" fill="#6c6c6c" stroke="#4a4a4a" stroke-width=".5" transform="rotate(27.5 460.9 359.9)"/>
<rect x="442.7" y="331.9" width="44.3" height="13.5" rx="4.9" fill="url(#cy)" transform="rotate(27.5 442.7 338.6)"/>
<rect x="495.4" y="319.3" width="13" height="11" fill="#6c6c6c" stroke="#4a4a4a" stroke-width=".5" transform="rotate(54.3 501.9 324.8)"/>
<rect x="490.5" y="289.1" width="44.1" height="13.5" rx="4.9" fill="url(#cy)" transform="rotate(54.3 490.5 295.9)"/>
<rect x="550.0" y="417.5" width="19.1" height="11.0" rx="4.0" fill="url(#cyd)" transform="rotate(-85.5 550.0 423.0)"/>
<rect x="596.0" y="468.2" width="87.7" height="11.5" rx="4.1" fill="url(#cy)" transform="rotate(-117.1 596.0 474.0)"/>
<rect x="541.5" y="371.8" width="27.3" height="11.5" rx="4.1" fill="url(#cy)" transform="rotate(55.4 541.5 377.5)"/>
<rect x="488.5" y="385.5" width="69.8" height="15.0" rx="5.4" fill="url(#cy)" transform="rotate(4.9 488.5 393.0)"/>
<rect x="555.5" y="398.0" width="122.2" height="12.0" rx="4.3" fill="url(#cy)" transform="rotate(-68.9 555.5 404.0)"/>
<circle cx="556.3" cy="399.6" r="7" fill="url(#s)"/>
<g id="strap">
<path d="M348 160 L346.5 174 Q347 190 352 200 L383 258 Q389 271 397 275 L431 261 L437 246 L403 259 Z" fill="#7a7a7a" stroke="#2e2e2e" stroke-width="1"/>
<path d="M352 172 Q351 188 356 198 L386 254 Q391 265 398 268 L404 258 L352 160 Z" fill="url(#stg)"/>
<path d="M349 166 Q348 186 353 198 L384 256 Q389 268 397 272" fill="none" stroke="#444" stroke-width="2.2"/>
<path d="M397 262 L404 259 L411 271 L401 275 Z" fill="#bdbdbd" stroke="#333" stroke-width=".8"/><path d="M409 259 L431 250 L436 258 L414 268 Z" fill="#9a9a9a" stroke="#333" stroke-width=".8"/>
<clipPath id="st"><path d="M348 160 L384 144 L439 245 L403 260 Z"/></clipPath>
<path d="M348 160 L384 144 L439 245 L403 260 Z" fill="#4c4c4c"/>
<g clip-path="url(#st)">
<circle cx="357.6" cy="163.9" r="6.6" fill="url(#c)" stroke="#242424" stroke-width=".8"/><circle cx="357.6" cy="163.9" r="6.0" fill="url(#cs)"/><circle cx="369.6" cy="158.6" r="6.6" fill="url(#c)" stroke="#242424" stroke-width=".8"/><circle cx="369.6" cy="158.6" r="6.0" fill="url(#cs)"/><circle cx="381.6" cy="153.2" r="6.6" fill="url(#c)" stroke="#242424" stroke-width=".8"/><circle cx="381.6" cy="153.2" r="6.0" fill="url(#cs)"/><circle cx="364.9" cy="177.1" r="6.6" fill="url(#c)" stroke="#242424" stroke-width=".8"/><circle cx="364.9" cy="177.1" r="6.0" fill="url(#cs)"/><circle cx="376.9" cy="171.7" r="6.6" fill="url(#c)" stroke="#242424" stroke-width=".8"/><circle cx="376.9" cy="171.7" r="6.0" fill="url(#cs)"/><circle cx="388.9" cy="166.4" r="6.6" fill="url(#c)" stroke="#242424" stroke-width=".8"/><circle cx="388.9" cy="166.4" r="6.0" fill="url(#cs)"/><circle cx="372.1" cy="190.2" r="6.6" fill="url(#c)" stroke="#242424" stroke-width=".8"/><circle cx="372.1" cy="190.2" r="6.0" fill="url(#cs)"/><circle cx="384.1" cy="184.9" r="6.6" fill="url(#c)" stroke="#242424" stroke-width=".8"/><circle cx="384.1" cy="184.9" r="6.0" fill="url(#cs)"/><circle cx="396.1" cy="179.6" r="6.6" fill="url(#c)" stroke="#242424" stroke-width=".8"/><circle cx="396.1" cy="179.6" r="6.0" fill="url(#cs)"/><circle cx="379.3" cy="203.4" r="6.6" fill="url(#c)" stroke="#242424" stroke-width=".8"/><circle cx="379.3" cy="203.4" r="6.0" fill="url(#cs)"/><circle cx="391.3" cy="198.1" r="6.6" fill="url(#c)" stroke="#242424" stroke-width=".8"/><circle cx="391.3" cy="198.1" r="6.0" fill="url(#cs)"/><circle cx="403.3" cy="192.7" r="6.6" fill="url(#c)" stroke="#242424" stroke-width=".8"/><circle cx="403.3" cy="192.7" r="6.0" fill="url(#cs)"/><circle cx="386.6" cy="216.5" r="6.6" fill="url(#c)" stroke="#242424" stroke-width=".8"/><circle cx="386.6" cy="216.5" r="6.0" fill="url(#cs)"/><circle cx="398.6" cy="211.2" r="6.6" fill="url(#c)" stroke="#242424" stroke-width=".8"/><circle cx="398.6" cy="211.2" r="6.0" fill="url(#cs)"/><circle cx="410.6" cy="205.9" r="6.6" fill="url(#c)" stroke="#242424" stroke-width=".8"/><circle cx="410.6" cy="205.9" r="6.0" fill="url(#cs)"/><circle cx="393.8" cy="229.7" r="6.6" fill="url(#c)" stroke="#242424" stroke-width=".8"/><circle cx="393.8" cy="229.7" r="6.0" fill="url(#cs)"/><circle cx="405.8" cy="224.4" r="6.6" fill="url(#c)" stroke="#242424" stroke-width=".8"/><circle cx="405.8" cy="224.4" r="6.0" fill="url(#cs)"/><circle cx="417.8" cy="219.0" r="6.6" fill="url(#c)" stroke="#242424" stroke-width=".8"/><circle cx="417.8" cy="219.0" r="6.0" fill="url(#cs)"/><circle cx="401.0" cy="242.9" r="6.6" fill="url(#c)" stroke="#242424" stroke-width=".8"/><circle cx="401.0" cy="242.9" r="6.0" fill="url(#cs)"/><circle cx="413.0" cy="237.5" r="6.6" fill="url(#c)" stroke="#242424" stroke-width=".8"/><circle cx="413.0" cy="237.5" r="6.0" fill="url(#cs)"/><circle cx="425.0" cy="232.2" r="6.6" fill="url(#c)" stroke="#242424" stroke-width=".8"/><circle cx="425.0" cy="232.2" r="6.0" fill="url(#cs)"/><circle cx="408.3" cy="256.0" r="6.6" fill="url(#c)" stroke="#242424" stroke-width=".8"/><circle cx="408.3" cy="256.0" r="6.0" fill="url(#cs)"/><circle cx="420.3" cy="250.7" r="6.6" fill="url(#c)" stroke="#242424" stroke-width=".8"/><circle cx="420.3" cy="250.7" r="6.0" fill="url(#cs)"/><circle cx="432.3" cy="245.4" r="6.6" fill="url(#c)" stroke="#242424" stroke-width=".8"/><circle cx="432.3" cy="245.4" r="6.0" fill="url(#cs)"/><g stroke="#2a2a2a" stroke-width=".7"><circle cx="428.2" cy="224.8" r="3.4" fill="url(#s)"/><circle cx="393.7" cy="172.5" r="3.4" fill="url(#s)"/><circle cx="432.9" cy="237.0" r="3.4" fill="url(#s)"/><circle cx="383.0" cy="210.0" r="3.4" fill="url(#s)"/><circle cx="400.6" cy="232.7" r="3.4" fill="url(#s)"/><circle cx="392.8" cy="237.3" r="3.4" fill="url(#s)"/><circle cx="394.5" cy="218.5" r="3.4" fill="url(#s)"/><circle cx="384.6" cy="174.1" r="3.4" fill="url(#s)"/><circle cx="369.2" cy="171.2" r="3.4" fill="url(#s)"/><circle cx="413.2" cy="226.3" r="3.4" fill="url(#s)"/><circle cx="411.4" cy="246.3" r="3.4" fill="url(#s)"/><circle cx="383.4" cy="194.2" r="3.4" fill="url(#s)"/><circle cx="412.4" cy="198.3" r="3.4" fill="url(#s)"/><circle cx="375.9" cy="162.7" r="3.4" fill="url(#s)"/><circle cx="367.6" cy="183.9" r="3.4" fill="url(#s)"/><circle cx="420.2" cy="243.4" r="3.4" fill="url(#s)"/><circle cx="373.1" cy="149.1" r="3.4" fill="url(#s)"/><circle cx="407.3" cy="212.8" r="3.4" fill="url(#s)"/><circle cx="392.7" cy="186.6" r="3.4" fill="url(#s)"/><circle cx="392.7" cy="206.0" r="3.4" fill="url(#s)"/><circle cx="403.1" cy="185.3" r="3.4" fill="url(#s)"/><circle cx="358.7" cy="156.7" r="3.4" fill="url(#s)"/><circle cx="376.4" cy="184.3" r="3.4" fill="url(#s)"/><circle cx="384.8" cy="146.2" r="3.4" fill="url(#s)"/><circle cx="415.9" cy="211.6" r="3.4" fill="url(#s)"/><circle cx="403.8" cy="250.2" r="3.4" fill="url(#s)"/><circle cx="383.9" cy="223.8" r="3.4" fill="url(#s)"/><circle cx="355.9" cy="173.8" r="3.4" fill="url(#s)"/><circle cx="387.6" cy="158.7" r="3.4" fill="url(#s)"/><circle cx="371.2" cy="197.9" r="3.4" fill="url(#s)"/><circle cx="402.5" cy="204.2" r="3.4" fill="url(#s)"/><circle cx="350.5" cy="159.4" r="3.4" fill="url(#s)"/><circle cx="365.0" cy="164.5" r="3.4" fill="url(#s)"/><circle cx="365.1" cy="152.5" r="3.4" fill="url(#s)"/><circle cx="379.3" cy="216.8" r="3.4" fill="url(#s)"/><circle cx="375.4" cy="209.5" r="3.4" fill="url(#s)"/></g>
</g>
<circle cx="347.5" cy="160.1" r="3.1" fill="url(#s)"/>
<circle cx="355.4" cy="157.1" r="2.9" fill="url(#s)"/>
<circle cx="361.4" cy="154.3" r="3.0" fill="url(#s)"/>
<circle cx="369.1" cy="151.4" r="3.2" fill="url(#s)"/>
<circle cx="377.5" cy="147.2" r="3.3" fill="url(#s)"/>
<circle cx="383.3" cy="144.3" r="3.5" fill="url(#s)"/>
<circle cx="384.0" cy="144.5" r="3.3" fill="url(#s)"/>
<circle cx="386.6" cy="150.8" r="3.3" fill="url(#s)"/>
<circle cx="390.5" cy="155.7" r="3.5" fill="url(#s)"/>
<circle cx="394.3" cy="163.4" r="3.5" fill="url(#s)"/>
<circle cx="398.2" cy="170.1" r="3.1" fill="url(#s)"/>
<circle cx="401.8" cy="175.5" r="3.5" fill="url(#s)"/>
<circle cx="405.4" cy="181.1" r="2.9" fill="url(#s)"/>
<circle cx="407.5" cy="189.1" r="3.1" fill="url(#s)"/>
<circle cx="411.8" cy="194.1" r="3.2" fill="url(#s)"/>
<circle cx="414.7" cy="200.5" r="3.3" fill="url(#s)"/>
<circle cx="418.5" cy="207.9" r="3.3" fill="url(#s)"/>
<circle cx="422.7" cy="214.2" r="3.6" fill="url(#s)"/>
<circle cx="425.6" cy="219.1" r="3.5" fill="url(#s)"/>
<circle cx="429.6" cy="226.9" r="3.3" fill="url(#s)"/>
<circle cx="432.6" cy="231.8" r="3.5" fill="url(#s)"/>
<circle cx="435.7" cy="238.3" r="2.9" fill="url(#s)"/>
<circle cx="439.7" cy="246.0" r="2.9" fill="url(#s)"/>
<circle cx="439.6" cy="244.8" r="2.9" fill="url(#s)"/>
<circle cx="431.4" cy="248.5" r="3.5" fill="url(#s)"/>
<circle cx="423.7" cy="251.2" r="2.8" fill="url(#s)"/>
<circle cx="417.8" cy="253.7" r="3.5" fill="url(#s)"/>
<circle cx="411.2" cy="257.0" r="3.6" fill="url(#s)"/>
<circle cx="402.6" cy="259.2" r="3.3" fill="url(#s)"/>
</g>
<rect x="0" y="0" width="703" height="1" fill="#5a5a5a"/><rect x="0" y="1" width="703" height="1" fill="#f0f0f0"/><rect x="0" y="2" width="703" height="1" fill="#bcbcbc"/><rect x="0" y="3" width="703" height="1" fill="#686874"/>
<linearGradient id="shd" x1="0" y1="0" x2="1" y2="0"><stop offset="0" stop-color="#404070" stop-opacity="0"/><stop offset="1" stop-color="#404070" stop-opacity=".17"/></linearGradient><rect x="684" y="4" width="18" height="845" fill="url(#shd)"/><rect x="702" y="4" width="1" height="845" fill="#9c9cc6"/>
</svg></div><div id="dlg">
<div id="title"><svg style="left:8.5px;top:6px" width="15.3" height="14" viewBox="0 0 17 16"><path d="M6.2 1.2 L11 .8 L11.2 5 L15.6 4.8 L15.4 9.6 L11 9.9 L10.6 14.6 L5.8 14.4 L6 10 L1.4 9.8 L1.8 5.4 L6.3 5.5 Z" fill="#f00000" stroke="#c80000" stroke-width=".6"/></svg><div class="tt">Fix Wizard (Part: Alarm Clock ) &gt; Shells</div>
<svg style="left:530px;top:0" width="108" height="29" viewBox="0 0 108 29"><path d="M6 13.5h11" stroke="#9a9a9a" stroke-width="1" fill="none"/><rect x="51.500" y="8.500" width="9" height="9" rx="1" fill="none" stroke="#e0e0e0"/><path d="M97.300 8l10.400 10.400M107.700 8l-10.400 10.400" stroke="#8a8a8a" stroke-width="1" fill="none"/></svg>
</div>
<div style="left:0;top:29px;width:1px;height:820px;background:#f7f7ff"></div>
<div class="side"><div class="in"></div></div>
<div style="left:31px;top:225px;width:88px;height:21px;background:#ebebeb"></div>
<div class="sep" style="top:88px"></div><div class="sep" style="top:256px"></div>
<svg width="0" height="0" style="left:0;top:0"><defs><radialGradient id="lens" cx=".4" cy=".35" r=".7"><stop offset="0" stop-color="#e4f3fd"/><stop offset=".6" stop-color="#b9d9f3"/><stop offset="1" stop-color="#8fb9e0"/></radialGradient><linearGradient id="pg" x1="0" y1="0" x2="1" y2="1"><stop offset="0" stop-color="#e4eefb"/><stop offset="1" stop-color="#b4cbee"/></linearGradient><linearGradient id="cl" x1="0" y1="0" x2="1" y2="1"><stop offset="0" stop-color="#e0e6fa"/><stop offset="1" stop-color="#a9b4e6"/></linearGradient><linearGradient id="bl" x1="0" y1="0" x2="1" y2="1"><stop offset="0" stop-color="#a9c8f2"/><stop offset="1" stop-color="#6f98de"/></linearGradient><linearGradient id="red" x1="0" y1="0" x2="1" y2="1"><stop offset="0" stop-color="#e8463c"/><stop offset="1" stop-color="#a81616"/></linearGradient><linearGradient id="red2" x1="0" y1="0" x2="1" y2="1"><stop offset="0" stop-color="#c8283c"/><stop offset="1" stop-color="#e04a50"/></linearGradient><linearGradient id="grn" x1="0" y1="0" x2="1" y2="1"><stop offset="0" stop-color="#7fd06a"/><stop offset="1" stop-color="#2e8a2e"/></linearGradient></defs></svg>
<div class="si" style="left:33.2px;top:39.8px">Diagnostics</div>
<svg class="ic" style="left:11px;top:36.5px;overflow:visible" width="20" height="20" viewBox="0 0 20 20"><path d="M8.600 9.800 L2.400 16.200" stroke="#b08428" stroke-width="4.200" stroke-linecap="round"/><path d="M8.500 9.900 L2.500 16.100" stroke="#ecbb4e" stroke-width="2.600" stroke-linecap="round"/><circle cx="12.500" cy="6" r="5.400" fill="url(#lens)" stroke="#5f7fa8" stroke-width="1.400"/></svg>
<div class="si" style="left:33.2px;top:60.8px">Combined Fix</div>
<svg class="ic" style="left:11px;top:57.5px;overflow:visible" width="20" height="20" viewBox="0 0 20 20"><g stroke="#8ea3c6" stroke-width=".9" stroke-linejoin="round"><polygon points="7.800,2.200 17.800,5.100 17.800,13.900 7.800,11.300" fill="#c3d5f0"/><polygon points="5.600,3.800 15.600,6.700 15.600,15.500 5.600,12.900" fill="#cfdef5"/><polygon points="3.400,5.400 13.400,8.300 13.400,17.100 3.400,14.500" fill="url(#pg)"/></g></svg>
<div class="si" style="left:33.2px;top:102.8px">Normals</div>
<svg class="ic" style="left:11px;top:99.5px;overflow:visible" width="20" height="20" viewBox="0 0 20 20"><polygon points="0.5,4.4 8.9,7.3 8.9,18.7 1.2,13" fill="url(#cl)" stroke="#34345e" stroke-width="1.1" stroke-linejoin="round"/><polygon points="8.9,7.3 18.5,4.4 18.5,14.9 8.9,18.7" fill="url(#red)" stroke="#34345e" stroke-width="1.1" stroke-linejoin="round"/><polygon points="0.5,4.4 9.5,0 18.5,4.4 8.9,7.3" fill="#b4bce6" stroke="#34345e" stroke-width="1.1" stroke-linejoin="round"/><path d="M1.6 5.3 L8.9 8 L17.4 5.4 M9.6 8.4 L9.6 17.6" stroke="#fff" stroke-width=".7" fill="none" opacity=".75"/></svg>
<div class="si" style="left:33.2px;top:123.8px">Stitching</div>
<svg class="ic" style="left:11px;top:120.5px;overflow:visible" width="20" height="20" viewBox="0 0 20 20"><g transform="translate(2.2,1.5) scale(.86)"><polygon points="0.5,4.4 8.9,7.3 8.9,18.7 1.2,13" fill="url(#cl)" stroke="#40406a" stroke-width="1.1" stroke-linejoin="round"/><polygon points="8.9,7.3 18.5,4.4 18.5,14.9 8.9,18.7" fill="#8e9ad8" stroke="#40406a" stroke-width="1.1" stroke-linejoin="round"/><polygon points="0.5,4.4 9.5,0 18.5,4.4 8.9,7.3" fill="#b0b8e4" stroke="#40406a" stroke-width="1.1" stroke-linejoin="round"/><path d="M1.6 5.3 L8.9 8 L17.4 5.4 M9.6 8.4 L9.6 17.6" stroke="#fff" stroke-width=".7" fill="none" opacity=".75"/><path d="M10.2 7.6 L17.4 4.6" stroke="#7a6a10" stroke-width="3"/><path d="M10.4 7.5 L17.2 4.7" stroke="#f4e23a" stroke-width="1.8"/></g></svg>
<div class="si" style="left:33.2px;top:144.8px">Noise Shells</div>
<svg class="ic" style="left:11px;top:141.5px;overflow:visible" width="20" height="20" viewBox="0 0 20 20"><polygon points="0.5,4.4 8.9,7.3 8.9,18.7 1.2,13" fill="url(#cl)" stroke="#40406a" stroke-width="0.7" stroke-linejoin="round"/><polygon points="8.9,7.3 18.5,4.4 18.5,14.9 8.9,18.7" fill="#a9b3e6" stroke="#40406a" stroke-width="0.7" stroke-linejoin="round"/><polygon points="0.5,4.4 9.5,0 18.5,4.4 8.9,7.3" fill="#c2caee" stroke="#40406a" stroke-width="0.7" stroke-linejoin="round"/><path d="M1.6 5.3 L8.9 8 L17.4 5.4 M9.6 8.4 L9.6 17.6" stroke="#fff" stroke-width=".7" fill="none" opacity=".75"/><g fill="#101020"><circle cx="4" cy="7.4" r="1.2"/><circle cx="7" cy="11.5" r="1.2"/><circle cx="3.6" cy="13" r="1.2"/><circle cx="7" cy="16" r="1.1"/><circle cx="11.8" cy="10" r="1.2"/><circle cx="15.8" cy="8.4" r="1.2"/><circle cx="13.6" cy="12.6" r="1.2"/><circle cx="11.8" cy="15.4" r="1.1"/><circle cx="16" cy="13.6" r="1.1"/><circle cx="10" cy="3.4" r="1"/><circle cx="13" cy="5.2" r="1"/><circle cx="6.6" cy="5" r="1"/></g></svg>
<div class="si" style="left:33.2px;top:165.8px">Holes</div>
<svg class="ic" style="left:11px;top:162.5px;overflow:visible" width="20" height="20" viewBox="0 0 20 20"><polygon points="0.5,4.4 8.9,7.3 8.9,18.7 1.2,13" fill="url(#cl)" stroke="#34345e" stroke-width="1.1" stroke-linejoin="round"/><polygon points="8.9,7.3 18.5,4.4 18.5,14.9 8.9,18.7" fill="#8592d6" stroke="#34345e" stroke-width="1.1" stroke-linejoin="round"/><polygon points="0.5,4.4 9.5,0 18.5,4.4 8.9,7.3" fill="url(#red2)" stroke="#34345e" stroke-width="1.1" stroke-linejoin="round"/><path d="M1.6 5.3 L8.9 8 L17.4 5.4 M9.6 8.4 L9.6 17.6" stroke="#fff" stroke-width=".7" fill="none" opacity=".75"/></svg>
<div class="si" style="left:33.2px;top:186.8px">Triangles</div>
<svg class="ic" style="left:11px;top:183.5px;overflow:visible" width="20" height="20" viewBox="0 0 20 20"><polygon points="0.5,4.4 8.9,7.3 8.9,18.7 1.2,13" fill="#c3c3f0" stroke="#3c3ca0" stroke-width="1" stroke-linejoin="round"/><polygon points="8.9,7.3 18.5,4.4 18.5,14.9 8.9,18.7" fill="#b7b7ec" stroke="#3c3ca0" stroke-width="1" stroke-linejoin="round"/><polygon points="0.5,4.4 9.5,0 18.5,4.4 8.9,7.3" fill="#c9c9f3" stroke="#3c3ca0" stroke-width="1" stroke-linejoin="round"/><path d="M1.6 5.3 L8.9 8 L17.4 5.4 M9.6 8.4 L9.6 17.6" stroke="#fff" stroke-width=".7" fill="none" opacity=".75"/><path d="M1.5 4.8 L9.3 18.4 M9.3 8.2 L18 14.6 M9.3 8.2 L10 1.2 M9.3 18.4 L18 4.8" stroke="#3c3ca0" stroke-width=".8" fill="none"/></svg>
<div class="si" style="left:33.2px;top:207.8px">Overlaps</div>
<svg class="ic" style="left:11px;top:204.5px;overflow:visible" width="20" height="20" viewBox="0 0 20 20"><polygon points="0.5,4.4 8.9,7.3 8.9,18.7 1.2,13" fill="url(#cl)" stroke="#505086" stroke-width="0.8" stroke-linejoin="round"/><polygon points="8.9,7.3 18.5,4.4 18.5,14.9 8.9,18.7" fill="#7f8cd6" stroke="#505086" stroke-width="0.8" stroke-linejoin="round"/><polygon points="0.5,4.4 9.5,0 18.5,4.4 8.9,7.3" fill="#a6b0e2" stroke="#505086" stroke-width="0.8" stroke-linejoin="round"/><path d="M1.6 5.3 L8.9 8 L17.4 5.4 M9.6 8.4 L9.6 17.6" stroke="#fff" stroke-width=".7" fill="none" opacity=".75"/><path d="M6 6.5 L6 16.6 M6 6.5 L13.4 3.4" stroke="#6a6aa0" stroke-width=".9" fill="none"/></svg>
<div class="si" style="left:33.2px;top:228.8px">Shells</div>
<svg class="ic" style="left:11px;top:225.5px;overflow:visible" width="20" height="20" viewBox="0 0 20 20"><polygon points="0.5,4.4 8.9,7.3 8.9,18.7 1.2,13" fill="url(#bl)" stroke="#3c63ae" stroke-width="1.1" stroke-linejoin="round"/><polygon points="8.9,7.3 18.5,4.4 18.5,14.9 8.9,18.7" fill="#5d86d2" stroke="#3c63ae" stroke-width="1.1" stroke-linejoin="round"/><polygon points="0.5,4.4 9.5,0 18.5,4.4 8.9,7.3" fill="#8fb4ea" stroke="#3c63ae" stroke-width="1.1" stroke-linejoin="round"/><path d="M1.6 5.3 L8.9 8 L17.4 5.4 M9.6 8.4 L9.6 17.6" stroke="#fff" stroke-width=".7" fill="none" opacity=".75"/></svg>
<div class="si" style="left:33.2px;top:270.8px">Profiles</div>
<svg class="ic" style="left:11px;top:267.5px;overflow:visible" width="20" height="20" viewBox="0 0 20 20"><path d="M4.5 1.5 h6.5 l3.5 3.5 v12.5 h-10 z" fill="#fff" stroke="#4f9ad2" stroke-width="1"/><path d="M11 1.5 v3.5 h3.5" fill="#d7ecfa" stroke="#4f9ad2" stroke-width=".9"/><path d="M6.5 8h6M6.5 10.5h6M6.5 13h6" stroke="#2a4a88" stroke-width="1.1"/><path d="M4.5 16.2h10" stroke="#7fc0ea" stroke-width="1.6"/></svg>
<div class="n" style="left:137.5px;top:32.2px;transform:scaleX(.853)">Current Part:</div>
<div style="left:210px;top:33px;width:391px;height:21px;background:#fff;border:1px solid #d6d6d6;border-bottom-color:#a2a2a2;border-radius:3px"></div>
<div class="n" style="left:214px;top:36.6px;transform:scaleX(.845)">Alarm Clock</div>
<svg style="left:587px;top:41px" width="10" height="7" viewBox="0 0 10 7"><path d="M.8 1.2 L5 5.4 L9.2 1.2" fill="none" stroke="#333" stroke-width="1.1"/></svg>
<div class="btn" style="left:606.5px;top:34px;width:40px;height:22px;background:#f6f6f6;border-color:#e2e2e2"><div class="n" style="left:10px;top:3px;color:#9c9c9c;transform:scaleX(.87)">Next</div></div>
<div class="gb" style="left:133px;top:65px;width:520px;height:188px"></div>
<div class="fr" style="left:143.5px;top:92px;width:494px;height:42px"></div>
<div class="n" style="left:148.6px;top:84.7px;background:#fdfdfd;padding:0 3px;transform:scaleX(.866)">Diagnostics</div>
<svg style="left:152px;top:105px" width="17" height="16" viewBox="0 0 17 16"><path d="M1.2 1.5 C3 1.2 4.4 1.6 5.2 2.4 L8.4 6 L12.4 1 C13.4 .6 15 .8 15.8 1.2 L10.6 7.8 L15.8 14.4 C14.4 15 12.8 15 11.8 14.4 L8.2 9.8 L4.6 14.6 C3.4 15.2 2 15 .8 14.6 L6 8 Z" fill="#d42a1a"/></svg>
<div style="left:173.3px;top:104.8px;font-weight:bold;font-size:12px;line-height:14px">15</div>
<div class="n" style="left:217.6px;top:104.8px;transform:scaleX(.888)">shells detected</div>
<div class="btn" style="left:552px;top:101px;width:75px;height:24px"><svg style="left:3px;top:2px" width="20" height="20" viewBox="0 0 20 20"><path d="M8.600 9.800 L2.400 16.200" stroke="#b08428" stroke-width="4.200" stroke-linecap="round"/><path d="M8.500 9.900 L2.500 16.100" stroke="#ecbb4e" stroke-width="2.600" stroke-linecap="round"/><circle cx="12.500" cy="6" r="5.400" fill="url(#lens)" stroke="#5f7fa8" stroke-width="1.400"/></svg><div class="n" style="left:27.5px;top:5px;transform:scaleX(.876)">Update</div></div>
<div class="fr" style="left:143.5px;top:146px;width:494px;height:68px;background:rgba(244,244,244,.6)"></div>
<div class="n" style="left:148.6px;top:138.5px;background:#f9f9f9;padding:0 3px;transform:scaleX(.866)">Advice</div>
<div class="n" style="left:154.8px;top:158.8px;transform:scaleX(.906)">Use the tools to perform shell operations if needed.</div>
<div style="left:611px;top:159px;width:16px;height:45px;background:#ebebeb"></div>
<svg style="left:611px;top:159px" width="16" height="45" viewBox="0 0 16 45"><path d="M3.6 11.2 L8 5.6 L12.4 11.2 Z M3.6 33.6 L8 39.2 L12.4 33.6 Z" fill="#9a9a9a"/></svg>
<div class="btn" style="left:143.5px;top:219.5px;width:493px;height:23px;background:#fefefe"><svg style="left:2px;top:1px" width="22" height="21" viewBox="0 0 22 21"><g transform="translate(7,6.800)"><g><circle cx="0" cy="0" r="5" fill="#e8b020" stroke="#c08a14" stroke-width="2" stroke-dasharray="2 1.93"/><circle cx="0" cy="0" r="4.300" fill="#f8d23c"/><circle cx="-1" cy="-1" r="2.600" fill="#fbe070"/><circle cx="0" cy="0" r="1.900" fill="#1c1c2c"/></g></g><g transform="translate(14.600,14)"><g><circle cx="0" cy="0" r="5" fill="#e8b020" stroke="#c08a14" stroke-width="2" stroke-dasharray="2 1.93"/><circle cx="0" cy="0" r="4.300" fill="#f8d23c"/><circle cx="-1" cy="-1" r="2.600" fill="#fbe070"/><circle cx="0" cy="0" r="1.900" fill="#1c1c2c"/></g></g></svg><div class="nc" style="top:3.3px;left:13px;transform:scaleX(.86)">Automatic Fixing</div></div>
<div class="gb" style="left:133px;top:257.5px;width:520px;height:567px"></div>
<div class="btn" style="left:143.5px;top:266.5px;width:23px;height:19px;border-radius:4px"><svg style="left:5.5px;top:3.5px" width="11" height="11" viewBox="0 0 11 11"><path d="M1.400 5.400 L5.500 1.600 L9.600 5.400 M1.400 9.800 L5.500 6 L9.600 9.800" fill="none" stroke="#000" stroke-width="1.800"/></svg></div>
<div class="n" style="left:172.2px;top:268.8px;transform:scaleX(.864)">Manual</div>
<div style="left:143px;top:295px;width:494px;height:436px;border:1px solid #868686;background:#fff"><div style="left:1px;top:1px;right:1px;bottom:1px;border:1px solid #6a6a6a;border-right-color:#e3e3e3;border-bottom-color:#e3e3e3"></div></div>
<div class="vs" style="left:170.5px"></div>
<div class="vs" style="left:215.3px"></div>
<div class="vs" style="left:260.5px"></div>
<div class="vs" style="left:320.6px"></div>
<div class="vs" style="left:415.3px"></div>
<div class="vs" style="left:510.4px"></div>
<svg style="left:154.5px;top:298px" width="9" height="5" viewBox="0 0 9 5"><path d="M.6 4.4 L4.5 .8 L8.4 4.4" fill="none" stroke="#555" stroke-width=".9"/></svg>
<div class="hd" style="left:151.6px;top:303.9px;letter-spacing:0px">V</div>
<div class="hd" style="left:177px;top:303.9px;letter-spacing:0.05px">Clos...</div>
<div class="hd" style="left:267.2px;top:303.9px;letter-spacing:0.08px">Triangles</div>
<div class="hd" style="left:326.8px;top:303.9px;letter-spacing:0.42px">Surface (mm<span style="position:relative;top:-4px;font-size:7px;line-height:1px;letter-spacing:0">2</span>)</div>
<div class="hd" style="left:421.6px;top:303.9px;letter-spacing:0.6px">Volume (mm<span style="position:relative;top:-4px;font-size:7px;line-height:1px;letter-spacing:0">3</span>)</div>
<svg style="left:152px;top:324px" width="18" height="12" viewBox="0 0 18 12"><g fill="none" stroke="#3a4a68" stroke-width="1.1" stroke-linecap="round"><path d="M1.7 5.8 L3.7 1.9 Q4.4 .9 5.6 1 L7 1.2 Q8.100 1.4 8.400 2.6 L9.100 5.6"/><path d="M13.6 6.2 L14.4 3.4 Q15 2 16 2.6 Q16.800 3.3 16.700 5"/><rect x="1.100" y="5.700" width="5.100" height="3.900" rx=".8" fill="#4f9ae8" stroke="#2c62ac" stroke-width="1"/><rect x="8.500" y="6.400" width="4.900" height="4" rx=".8" fill="#4f9ae8" stroke="#2c62ac" stroke-width="1"/><rect x="2.300" y="6.700" width="2.400" height="1.500" fill="#a9d2f8" stroke="none"/><rect x="9.700" y="7.500" width="2.300" height="1.500" fill="#a9d2f8" stroke="none"/></g></svg>
<svg style="left:185.4px;top:324px" width="17" height="13" viewBox="0 0 17 13"><path d="M1 4.800 L6.100 11.200 L15.300 .5" fill="none" stroke="#1fd81f" stroke-width="2.100"/></svg>
<svg style="left:229px;top:321.5px" width="17.5" height="17.5" viewBox="0 0 20 20"><path d="M8.600 9.800 L2.400 16.200" stroke="#b08428" stroke-width="4.200" stroke-linecap="round"/><path d="M8.500 9.900 L2.500 16.100" stroke="#ecbb4e" stroke-width="2.600" stroke-linecap="round"/><circle cx="12.500" cy="6" r="5.400" fill="url(#lens)" stroke="#5f7fa8" stroke-width="1.400"/></svg>
<div class="cell" style="left:267.2px;top:326.1px">302278</div>
<div class="cell" style="left:327px;top:326.1px">1961</div>
<div class="cell" style="left:421.8px;top:326.1px">1039</div>
<svg style="left:152px;top:343px" width="18" height="12" viewBox="0 0 18 12"><g fill="none" stroke="#3a4a68" stroke-width="1.1" stroke-linecap="round"><path d="M1.7 5.8 L3.7 1.9 Q4.4 .9 5.6 1 L7 1.2 Q8.100 1.4 8.400 2.6 L9.100 5.6"/><path d="M13.6 6.2 L14.4 3.4 Q15 2 16 2.6 Q16.800 3.3 16.700 5"/><rect x="1.100" y="5.700" width="5.100" height="3.900" rx=".8" fill="#4f9ae8" stroke="#2c62ac" stroke-width="1"/><rect x="8.500" y="6.400" width="4.900" height="4" rx=".8" fill="#4f9ae8" stroke="#2c62ac" stroke-width="1"/><rect x="2.300" y="6.700" width="2.400" height="1.500" fill="#a9d2f8" stroke="none"/><rect x="9.700" y="7.500" width="2.300" height="1.500" fill="#a9d2f8" stroke="none"/></g></svg>
<svg style="left:185.4px;top:343px" width="17" height="13" viewBox="0 0 17 13"><path d="M1 4.800 L6.100 11.200 L15.300 .5" fill="none" stroke="#1fd81f" stroke-width="2.100"/></svg>
<svg style="left:229px;top:340.5px" width="17.5" height="17.5" viewBox="0 0 20 20"><path d="M8.600 9.800 L2.400 16.200" stroke="#b08428" stroke-width="4.200" stroke-linecap="round"/><path d="M8.500 9.900 L2.500 16.100" stroke="#ecbb4e" stroke-width="2.600" stroke-linecap="round"/><circle cx="12.500" cy="6" r="5.400" fill="url(#lens)" stroke="#5f7fa8" stroke-width="1.400"/></svg>
<div class="cell" style="left:267.2px;top:345.1px">36016</div>
<div class="cell" style="left:327px;top:345.1px">224</div>
<div class="cell" style="left:421.8px;top:345.1px">61</div>
<svg style="left:152px;top:362px" width="18" height="12" viewBox="0 0 18 12"><g fill="none" stroke="#3a4a68" stroke-width="1.1" stroke-linecap="round"><path d="M1.7 5.8 L3.7 1.9 Q4.4 .9 5.6 1 L7 1.2 Q8.100 1.4 8.400 2.6 L9.100 5.6"/><path d="M13.6 6.2 L14.4 3.4 Q15 2 16 2.6 Q16.800 3.3 16.700 5"/><rect x="1.100" y="5.700" width="5.100" height="3.900" rx=".8" fill="#4f9ae8" stroke="#2c62ac" stroke-width="1"/><rect x="8.500" y="6.400" width="4.900" height="4" rx=".8" fill="#4f9ae8" stroke="#2c62ac" stroke-width="1"/><rect x="2.300" y="6.700" width="2.400" height="1.500" fill="#a9d2f8" stroke="none"/><rect x="9.700" y="7.500" width="2.300" height="1.500" fill="#a9d2f8" stroke="none"/></g></svg>
<svg style="left:185.4px;top:362px" width="17" height="13" viewBox="0 0 17 13"><path d="M1 4.800 L6.100 11.200 L15.300 .5" fill="none" stroke="#1fd81f" stroke-width="2.100"/></svg>
<svg style="left:229px;top:359.5px" width="17.5" height="17.5" viewBox="0 0 20 20"><path d="M8.600 9.800 L2.400 16.200" stroke="#b08428" stroke-width="4.200" stroke-linecap="round"/><path d="M8.500 9.900 L2.500 16.100" stroke="#ecbb4e" stroke-width="2.600" stroke-linecap="round"/><circle cx="12.500" cy="6" r="5.400" fill="url(#lens)" stroke="#5f7fa8" stroke-width="1.400"/></svg>
<div class="cell" style="left:267.2px;top:364.1px">3834</div>
<div class="cell" style="left:327px;top:364.1px">94</div>
<div class="cell" style="left:421.8px;top:364.1px">22</div>
<svg style="left:152px;top:381px" width="18" height="12" viewBox="0 0 18 12"><g fill="none" stroke="#3a4a68" stroke-width="1.1" stroke-linecap="round"><path d="M1.7 5.8 L3.7 1.9 Q4.4 .9 5.6 1 L7 1.2 Q8.100 1.4 8.400 2.6 L9.100 5.6"/><path d="M13.6 6.2 L14.4 3.4 Q15 2 16 2.6 Q16.800 3.3 16.700 5"/><rect x="1.100" y="5.700" width="5.100" height="3.900" rx=".8" fill="#4f9ae8" stroke="#2c62ac" stroke-width="1"/><rect x="8.500" y="6.400" width="4.900" height="4" rx=".8" fill="#4f9ae8" stroke="#2c62ac" stroke-width="1"/><rect x="2.300" y="6.700" width="2.400" height="1.500" fill="#a9d2f8" stroke="none"/><rect x="9.700" y="7.500" width="2.300" height="1.500" fill="#a9d2f8" stroke="none"/></g></svg>
<svg style="left:185.4px;top:381px" width="17" height="13" viewBox="0 0 17 13"><path d="M1 4.800 L6.100 11.200 L15.300 .5" fill="none" stroke="#1fd81f" stroke-width="2.100"/></svg>
<svg style="left:229px;top:378.5px" width="17.5" height="17.5" viewBox="0 0 20 20"><path d="M8.600 9.800 L2.400 16.200" stroke="#b08428" stroke-width="4.200" stroke-linecap="round"/><path d="M8.500 9.900 L2.500 16.100" stroke="#ecbb4e" stroke-width="2.600" stroke-linecap="round"/><circle cx="12.500" cy="6" r="5.400" fill="url(#lens)" stroke="#5f7fa8" stroke-width="1.400"/></svg>
<div class="cell" style="left:267.2px;top:383.1px">802</div>
<div class="cell" style="left:327px;top:383.1px">21</div>
<div class="cell" style="left:421.8px;top:383.1px">4</div>
<svg style="left:152px;top:400px" width="18" height="12" viewBox="0 0 18 12"><g fill="none" stroke="#3a4a68" stroke-width="1.1" stroke-linecap="round"><path d="M1.7 5.8 L3.7 1.9 Q4.4 .9 5.6 1 L7 1.2 Q8.100 1.4 8.400 2.6 L9.100 5.6"/><path d="M13.6 6.2 L14.4 3.4 Q15 2 16 2.6 Q16.800 3.3 16.700 5"/><rect x="1.100" y="5.700" width="5.100" height="3.900" rx=".8" fill="#4f9ae8" stroke="#2c62ac" stroke-width="1"/><rect x="8.500" y="6.400" width="4.900" height="4" rx=".8" fill="#4f9ae8" stroke="#2c62ac" stroke-width="1"/><rect x="2.300" y="6.700" width="2.400" height="1.500" fill="#a9d2f8" stroke="none"/><rect x="9.700" y="7.500" width="2.300" height="1.500" fill="#a9d2f8" stroke="none"/></g></svg>
<svg style="left:185.4px;top:400px" width="17" height="13" viewBox="0 0 17 13"><path d="M1 4.800 L6.100 11.200 L15.300 .5" fill="none" stroke="#1fd81f" stroke-width="2.100"/></svg>
<svg style="left:229px;top:397.5px" width="17.5" height="17.5" viewBox="0 0 20 20"><path d="M8.600 9.800 L2.400 16.200" stroke="#b08428" stroke-width="4.200" stroke-linecap="round"/><path d="M8.500 9.900 L2.500 16.100" stroke="#ecbb4e" stroke-width="2.600" stroke-linecap="round"/><circle cx="12.500" cy="6" r="5.400" fill="url(#lens)" stroke="#5f7fa8" stroke-width="1.400"/></svg>
<div class="cell" style="left:267.2px;top:402.1px">802</div>
<div class="cell" style="left:327px;top:402.1px">21</div>
<div class="cell" style="left:421.8px;top:402.1px">4</div>
<svg style="left:152px;top:419px" width="18" height="12" viewBox="0 0 18 12"><g fill="none" stroke="#3a4a68" stroke-width="1.1" stroke-linecap="round"><path d="M1.7 5.8 L3.7 1.9 Q4.4 .9 5.6 1 L7 1.2 Q8.100 1.4 8.400 2.6 L9.100 5.6"/><path d="M13.6 6.2 L14.4 3.4 Q15 2 16 2.6 Q16.800 3.3 16.700 5"/><rect x="1.100" y="5.700" width="5.100" height="3.900" rx=".8" fill="#4f9ae8" stroke="#2c62ac" stroke-width="1"/><rect x="8.500" y="6.400" width="4.900" height="4" rx=".8" fill="#4f9ae8" stroke="#2c62ac" stroke-width="1"/><rect x="2.300" y="6.700" width="2.400" height="1.500" fill="#a9d2f8" stroke="none"/><rect x="9.700" y="7.500" width="2.300" height="1.500" fill="#a9d2f8" stroke="none"/></g></svg>
<svg style="left:185.4px;top:419px" width="17" height="13" viewBox="0 0 17 13"><path d="M1 4.800 L6.100 11.200 L15.300 .5" fill="none" stroke="#1fd81f" stroke-width="2.100"/></svg>
<svg style="left:229px;top:416.5px" width="17.5" height="17.5" viewBox="0 0 20 20"><path d="M8.600 9.800 L2.400 16.200" stroke="#b08428" stroke-width="4.200" stroke-linecap="round"/><path d="M8.500 9.900 L2.500 16.100" stroke="#ecbb4e" stroke-width="2.600" stroke-linecap="round"/><circle cx="12.500" cy="6" r="5.400" fill="url(#lens)" stroke="#5f7fa8" stroke-width="1.400"/></svg>
<div class="cell" style="left:267.2px;top:421.1px">802</div>
<div class="cell" style="left:327px;top:421.1px">21</div>
<div class="cell" style="left:421.8px;top:421.1px">4</div>
<svg style="left:152px;top:438px" width="18" height="12" viewBox="0 0 18 12"><g fill="none" stroke="#3a4a68" stroke-width="1.1" stroke-linecap="round"><path d="M1.7 5.8 L3.7 1.9 Q4.4 .9 5.6 1 L7 1.2 Q8.100 1.4 8.400 2.6 L9.100 5.6"/><path d="M13.6 6.2 L14.4 3.4 Q15 2 16 2.6 Q16.800 3.3 16.700 5"/><rect x="1.100" y="5.700" width="5.100" height="3.900" rx=".8" fill="#4f9ae8" stroke="#2c62ac" stroke-width="1"/><rect x="8.500" y="6.400" width="4.900" height="4" rx=".8" fill="#4f9ae8" stroke="#2c62ac" stroke-width="1"/><rect x="2.300" y="6.700" width="2.400" height="1.500" fill="#a9d2f8" stroke="none"/><rect x="9.700" y="7.500" width="2.300" height="1.500" fill="#a9d2f8" stroke="none"/></g></svg>
<svg style="left:185.4px;top:438px" width="17" height="13" viewBox="0 0 17 13"><path d="M1 4.800 L6.100 11.200 L15.300 .5" fill="none" stroke="#1fd81f" stroke-width="2.100"/></svg>
<svg style="left:229px;top:435.5px" width="17.5" height="17.5" viewBox="0 0 20 20"><path d="M8.600 9.800 L2.400 16.200" stroke="#b08428" stroke-width="4.200" stroke-linecap="round"/><path d="M8.500 9.900 L2.500 16.100" stroke="#ecbb4e" stroke-width="2.600" stroke-linecap="round"/><circle cx="12.500" cy="6" r="5.400" fill="url(#lens)" stroke="#5f7fa8" stroke-width="1.400"/></svg>
<div class="cell" style="left:267.2px;top:440.1px">802</div>
<div class="cell" style="left:327px;top:440.1px">21</div>
<div class="cell" style="left:421.8px;top:440.1px">4</div>
<svg style="left:152px;top:457px" width="18" height="12" viewBox="0 0 18 12"><g fill="none" stroke="#3a4a68" stroke-width="1.1" stroke-linecap="round"><path d="M1.7 5.8 L3.7 1.9 Q4.4 .9 5.6 1 L7 1.2 Q8.100 1.4 8.400 2.6 L9.100 5.6"/><path d="M13.6 6.2 L14.4 3.4 Q15 2 16 2.6 Q16.800 3.3 16.700 5"/><rect x="1.100" y="5.700" width="5.100" height="3.900" rx=".8" fill="#4f9ae8" stroke="#2c62ac" stroke-width="1"/><rect x="8.500" y="6.400" width="4.900" height="4" rx=".8" fill="#4f9ae8" stroke="#2c62ac" stroke-width="1"/><rect x="2.300" y="6.700" width="2.400" height="1.500" fill="#a9d2f8" stroke="none"/><rect x="9.700" y="7.500" width="2.300" height="1.500" fill="#a9d2f8" stroke="none"/></g></svg>
<svg style="left:185.4px;top:457px" width="17" height="13" viewBox="0 0 17 13"><path d="M1 4.800 L6.100 11.200 L15.300 .5" fill="none" stroke="#1fd81f" stroke-width="2.100"/></svg>
<svg style="left:229px;top:454.5px" width="17.5" height="17.5" viewBox="0 0 20 20"><path d="M8.600 9.800 L2.400 16.200" stroke="#b08428" stroke-width="4.200" stroke-linecap="round"/><path d="M8.500 9.900 L2.500 16.100" stroke="#ecbb4e" stroke-width="2.600" stroke-linecap="round"/><circle cx="12.500" cy="6" r="5.400" fill="url(#lens)" stroke="#5f7fa8" stroke-width="1.400"/></svg>
<div class="cell" style="left:267.2px;top:459.1px">802</div>
<div class="cell" style="left:327px;top:459.1px">21</div>
<div class="cell" style="left:421.8px;top:459.1px">4</div>
<svg style="left:152px;top:476px" width="18" height="12" viewBox="0 0 18 12"><g fill="none" stroke="#3a4a68" stroke-width="1.1" stroke-linecap="round"><path d="M1.7 5.8 L3.7 1.9 Q4.4 .9 5.6 1 L7 1.2 Q8.100 1.4 8.400 2.6 L9.100 5.6"/><path d="M13.6 6.2 L14.4 3.4 Q15 2 16 2.6 Q16.800 3.3 16.700 5"/><rect x="1.100" y="5.700" width="5.100" height="3.900" rx=".8" fill="#4f9ae8" stroke="#2c62ac" stroke-width="1"/><rect x="8.500" y="6.400" width="4.900" height="4" rx=".8" fill="#4f9ae8" stroke="#2c62ac" stroke-width="1"/><rect x="2.300" y="6.700" width="2.400" height="1.500" fill="#a9d2f8" stroke="none"/><rect x="9.700" y="7.500" width="2.300" height="1.500" fill="#a9d2f8" stroke="none"/></g></svg>
<svg style="left:185.4px;top:476px" width="17" height="13" viewBox="0 0 17 13"><path d="M1 4.800 L6.100 11.200 L15.300 .5" fill="none" stroke="#1fd81f" stroke-width="2.100"/></svg>
<svg style="left:229px;top:473.5px" width="17.5" height="17.5" viewBox="0 0 20 20"><path d="M8.600 9.800 L2.400 16.200" stroke="#b08428" stroke-width="4.200" stroke-linecap="round"/><path d="M8.500 9.900 L2.500 16.100" stroke="#ecbb4e" stroke-width="2.600" stroke-linecap="round"/><circle cx="12.500" cy="6" r="5.400" fill="url(#lens)" stroke="#5f7fa8" stroke-width="1.400"/></svg>
<div class="cell" style="left:267.2px;top:478.1px">850</div>
<div class="cell" style="left:327px;top:478.1px">21</div>
<div class="cell" style="left:421.8px;top:478.1px">4</div>
<svg style="left:152px;top:495px" width="18" height="12" viewBox="0 0 18 12"><g fill="none" stroke="#3a4a68" stroke-width="1.1" stroke-linecap="round"><path d="M1.7 5.8 L3.7 1.9 Q4.4 .9 5.6 1 L7 1.2 Q8.100 1.4 8.400 2.6 L9.100 5.6"/><path d="M13.6 6.2 L14.4 3.4 Q15 2 16 2.6 Q16.800 3.3 16.700 5"/><rect x="1.100" y="5.700" width="5.100" height="3.900" rx=".8" fill="#4f9ae8" stroke="#2c62ac" stroke-width="1"/><rect x="8.500" y="6.400" width="4.900" height="4" rx=".8" fill="#4f9ae8" stroke="#2c62ac" stroke-width="1"/><rect x="2.300" y="6.700" width="2.400" height="1.500" fill="#a9d2f8" stroke="none"/><rect x="9.700" y="7.500" width="2.300" height="1.500" fill="#a9d2f8" stroke="none"/></g></svg>
<svg style="left:185.4px;top:495px" width="17" height="13" viewBox="0 0 17 13"><path d="M1 4.800 L6.100 11.200 L15.300 .5" fill="none" stroke="#1fd81f" stroke-width="2.100"/></svg>
<svg style="left:229px;top:492.5px" width="17.5" height="17.5" viewBox="0 0 20 20"><path d="M8.600 9.800 L2.400 16.200" stroke="#b08428" stroke-width="4.200" stroke-linecap="round"/><path d="M8.500 9.900 L2.500 16.100" stroke="#ecbb4e" stroke-width="2.600" stroke-linecap="round"/><circle cx="12.500" cy="6" r="5.400" fill="url(#lens)" stroke="#5f7fa8" stroke-width="1.400"/></svg>
<div class="cell" style="left:267.2px;top:497.1px">830</div>
<div class="cell" style="left:327px;top:497.1px">21</div>
<div class="cell" style="left:421.8px;top:497.1px">4</div>
<svg style="left:152px;top:514px" width="18" height="12" viewBox="0 0 18 12"><g fill="none" stroke="#3a4a68" stroke-width="1.1" stroke-linecap="round"><path d="M1.7 5.8 L3.7 1.9 Q4.4 .9 5.6 1 L7 1.2 Q8.100 1.4 8.400 2.6 L9.100 5.6"/><path d="M13.6 6.2 L14.4 3.4 Q15 2 16 2.6 Q16.800 3.3 16.700 5"/><rect x="1.100" y="5.700" width="5.100" height="3.900" rx=".8" fill="#4f9ae8" stroke="#2c62ac" stroke-width="1"/><rect x="8.500" y="6.400" width="4.900" height="4" rx=".8" fill="#4f9ae8" stroke="#2c62ac" stroke-width="1"/><rect x="2.300" y="6.700" width="2.400" height="1.500" fill="#a9d2f8" stroke="none"/><rect x="9.700" y="7.500" width="2.300" height="1.500" fill="#a9d2f8" stroke="none"/></g></svg>
<svg style="left:185.4px;top:514px" width="17" height="13" viewBox="0 0 17 13"><path d="M1 4.800 L6.100 11.200 L15.300 .5" fill="none" stroke="#1fd81f" stroke-width="2.100"/></svg>
<svg style="left:229px;top:511.5px" width="17.5" height="17.5" viewBox="0 0 20 20"><path d="M8.600 9.800 L2.400 16.200" stroke="#b08428" stroke-width="4.200" stroke-linecap="round"/><path d="M8.500 9.900 L2.500 16.100" stroke="#ecbb4e" stroke-width="2.600" stroke-linecap="round"/><circle cx="12.500" cy="6" r="5.400" fill="url(#lens)" stroke="#5f7fa8" stroke-width="1.400"/></svg>
<div class="cell" style="left:267.2px;top:516.1px">830</div>
<div class="cell" style="left:327px;top:516.1px">21</div>
<div class="cell" style="left:421.8px;top:516.1px">4</div>
<svg style="left:152px;top:533px" width="18" height="12" viewBox="0 0 18 12"><g fill="none" stroke="#3a4a68" stroke-width="1.1" stroke-linecap="round"><path d="M1.7 5.8 L3.7 1.9 Q4.4 .9 5.6 1 L7 1.2 Q8.100 1.4 8.400 2.6 L9.100 5.6"/><path d="M13.6 6.2 L14.4 3.4 Q15 2 16 2.6 Q16.800 3.3 16.700 5"/><rect x="1.100" y="5.700" width="5.100" height="3.900" rx=".8" fill="#4f9ae8" stroke="#2c62ac" stroke-width="1"/><rect x="8.500" y="6.400" width="4.900" height="4" rx=".8" fill="#4f9ae8" stroke="#2c62ac" stroke-width="1"/><rect x="2.300" y="6.700" width="2.400" height="1.500" fill="#a9d2f8" stroke="none"/><rect x="9.700" y="7.500" width="2.300" height="1.500" fill="#a9d2f8" stroke="none"/></g></svg>
<svg style="left:185.4px;top:533px" width="17" height="13" viewBox="0 0 17 13"><path d="M1 4.800 L6.100 11.200 L15.300 .5" fill="none" stroke="#1fd81f" stroke-width="2.100"/></svg>
<svg style="left:229px;top:530.5px" width="17.5" height="17.5" viewBox="0 0 20 20"><path d="M8.600 9.800 L2.400 16.200" stroke="#b08428" stroke-width="4.200" stroke-linecap="round"/><path d="M8.500 9.900 L2.500 16.100" stroke="#ecbb4e" stroke-width="2.600" stroke-linecap="round"/><circle cx="12.500" cy="6" r="5.400" fill="url(#lens)" stroke="#5f7fa8" stroke-width="1.400"/></svg>
<div class="cell" style="left:267.2px;top:535.1px">830</div>
<div class="cell" style="left:327px;top:535.1px">21</div>
<div class="cell" style="left:421.8px;top:535.1px">4</div>
<svg style="left:152px;top:552px" width="18" height="12" viewBox="0 0 18 12"><g fill="none" stroke="#3a4a68" stroke-width="1.1" stroke-linecap="round"><path d="M1.7 5.8 L3.7 1.9 Q4.4 .9 5.6 1 L7 1.2 Q8.100 1.4 8.400 2.6 L9.100 5.6"/><path d="M13.6 6.2 L14.4 3.4 Q15 2 16 2.6 Q16.800 3.3 16.700 5"/><rect x="1.100" y="5.700" width="5.100" height="3.900" rx=".8" fill="#4f9ae8" stroke="#2c62ac" stroke-width="1"/><rect x="8.500" y="6.400" width="4.900" height="4" rx=".8" fill="#4f9ae8" stroke="#2c62ac" stroke-width="1"/><rect x="2.300" y="6.700" width="2.400" height="1.500" fill="#a9d2f8" stroke="none"/><rect x="9.700" y="7.500" width="2.300" height="1.500" fill="#a9d2f8" stroke="none"/></g></svg>
<svg style="left:185.4px;top:552px" width="17" height="13" viewBox="0 0 17 13"><path d="M1 4.800 L6.100 11.200 L15.300 .5" fill="none" stroke="#1fd81f" stroke-width="2.100"/></svg>
<svg style="left:229px;top:549.5px" width="17.5" height="17.5" viewBox="0 0 20 20"><path d="M8.600 9.800 L2.400 16.200" stroke="#b08428" stroke-width="4.200" stroke-linecap="round"/><path d="M8.500 9.900 L2.500 16.100" stroke="#ecbb4e" stroke-width="2.600" stroke-linecap="round"/><circle cx="12.500" cy="6" r="5.400" fill="url(#lens)" stroke="#5f7fa8" stroke-width="1.400"/></svg>
<div class="cell" style="left:267.2px;top:554.1px">786</div>
<div class="cell" style="left:327px;top:554.1px">21</div>
<div class="cell" style="left:421.8px;top:554.1px">4</div>
<svg style="left:152px;top:571px" width="18" height="12" viewBox="0 0 18 12"><g fill="none" stroke="#3a4a68" stroke-width="1.1" stroke-linecap="round"><path d="M1.7 5.8 L3.7 1.9 Q4.4 .9 5.6 1 L7 1.2 Q8.100 1.4 8.400 2.6 L9.100 5.6"/><path d="M13.6 6.2 L14.4 3.4 Q15 2 16 2.6 Q16.800 3.3 16.700 5"/><rect x="1.100" y="5.700" width="5.100" height="3.900" rx=".8" fill="#4f9ae8" stroke="#2c62ac" stroke-width="1"/><rect x="8.500" y="6.400" width="4.900" height="4" rx=".8" fill="#4f9ae8" stroke="#2c62ac" stroke-width="1"/><rect x="2.300" y="6.700" width="2.400" height="1.500" fill="#a9d2f8" stroke="none"/><rect x="9.700" y="7.500" width="2.300" height="1.500" fill="#a9d2f8" stroke="none"/></g></svg>
<svg style="left:185.4px;top:571px" width="17" height="13" viewBox="0 0 17 13"><path d="M1 4.800 L6.100 11.200 L15.300 .5" fill="none" stroke="#1fd81f" stroke-width="2.100"/></svg>
<svg style="left:229px;top:568.5px" width="17.5" height="17.5" viewBox="0 0 20 20"><path d="M8.600 9.800 L2.400 16.200" stroke="#b08428" stroke-width="4.200" stroke-linecap="round"/><path d="M8.500 9.900 L2.500 16.100" stroke="#ecbb4e" stroke-width="2.600" stroke-linecap="round"/><circle cx="12.500" cy="6" r="5.400" fill="url(#lens)" stroke="#5f7fa8" stroke-width="1.400"/></svg>
<div class="cell" style="left:267.2px;top:573.1px">786</div>
<div class="cell" style="left:327px;top:573.1px">21</div>
<div class="cell" style="left:421.8px;top:573.1px">4</div>
<svg style="left:152px;top:590px" width="18" height="12" viewBox="0 0 18 12"><g fill="none" stroke="#3a4a68" stroke-width="1.1" stroke-linecap="round"><path d="M1.7 5.8 L3.7 1.9 Q4.4 .9 5.6 1 L7 1.2 Q8.100 1.4 8.400 2.6 L9.100 5.6"/><path d="M13.6 6.2 L14.4 3.4 Q15 2 16 2.6 Q16.800 3.3 16.700 5"/><rect x="1.100" y="5.700" width="5.100" height="3.900" rx=".8" fill="#4f9ae8" stroke="#2c62ac" stroke-width="1"/><rect x="8.500" y="6.400" width="4.900" height="4" rx=".8" fill="#4f9ae8" stroke="#2c62ac" stroke-width="1"/><rect x="2.300" y="6.700" width="2.400" height="1.500" fill="#a9d2f8" stroke="none"/><rect x="9.700" y="7.500" width="2.300" height="1.500" fill="#a9d2f8" stroke="none"/></g></svg>
<svg style="left:185.4px;top:590px" width="17" height="13" viewBox="0 0 17 13"><path d="M1 4.800 L6.100 11.200 L15.300 .5" fill="none" stroke="#1fd81f" stroke-width="2.100"/></svg>
<svg style="left:229px;top:587.5px" width="17.5" height="17.5" viewBox="0 0 20 20"><path d="M8.600 9.800 L2.400 16.200" stroke="#b08428" stroke-width="4.200" stroke-linecap="round"/><path d="M8.500 9.900 L2.500 16.100" stroke="#ecbb4e" stroke-width="2.600" stroke-linecap="round"/><circle cx="12.500" cy="6" r="5.400" fill="url(#lens)" stroke="#5f7fa8" stroke-width="1.400"/></svg>
<div class="cell" style="left:267.2px;top:592.1px">798</div>
<div class="cell" style="left:327px;top:592.1px">21</div>
<div class="cell" style="left:421.8px;top:592.1px">4</div>
<div class="btn" style="left:143px;top:735px;width:144px;height:24px"><svg style="left:2px;top:0" width="22" height="21" viewBox="0 0 20 20"><polygon points="0.5,4.4 8.9,7.3 8.9,18.7 1.2,13" fill="url(#cl)" stroke="#40406a" stroke-width="1.1" stroke-linejoin="round"/><polygon points="8.9,7.3 18.5,4.4 18.5,14.9 8.9,18.7" fill="#8e9ad8" stroke="#40406a" stroke-width="1.1" stroke-linejoin="round"/><polygon points="0.5,4.4 9.5,0 18.5,4.4 8.9,7.3" fill="#b4bce6" stroke="#40406a" stroke-width="1.1" stroke-linejoin="round"/><path d="M1.6 5.3 L8.9 8 L17.4 5.4 M9.6 8.4 L9.6 17.6" stroke="#fff" stroke-width=".7" fill="none" opacity=".75"/><path d="M9 6 L9 17 L11.6 14.6 L13.4 18.6 L15 17.9 L13.2 14 L16.6 13.8 Z" fill="#0a0a0a" stroke="#fff" stroke-width=".9"/></svg><div class="nc" style="top:3.8px;left:16.0px;transform:scaleX(0.87)">Select Shells</div></div>
<div class="btn" style="left:293.5px;top:736px;width:116.5px;height:22px"><div class="nc" style="top:2.8px;left:0px;transform:scaleX(0.87)">Select All</div></div>
<div class="btn" style="left:417px;top:736px;width:92.5px;height:22px"><div class="nc" style="top:2.8px;left:0px;transform:scaleX(0.87)">Invert Sel</div></div>
<div class="btn" style="left:516.5px;top:736px;width:119.5px;height:22px"><div class="nc" style="top:2.8px;left:0px;transform:scaleX(0.87)">Hide Unsel</div></div>
<div class="btn" style="left:143px;top:763px;width:245px;height:24px"><svg style="left:2px;top:0" width="22" height="21" viewBox="0 0 20 20"><polygon points="0.5,4.4 8.9,7.3 8.9,18.7 1.2,13" fill="url(#grn)" stroke="#1e5a22" stroke-width="1.1" stroke-linejoin="round"/><polygon points="8.9,7.3 18.5,4.4 18.5,14.9 8.9,18.7" fill="#2f8a34" stroke="#1e5a22" stroke-width="1.1" stroke-linejoin="round"/><polygon points="0.5,4.4 9.5,0 18.5,4.4 8.9,7.3" fill="#58b048" stroke="#1e5a22" stroke-width="1.1" stroke-linejoin="round"/><path d="M1.6 5.3 L8.9 8 L17.4 5.4 M9.6 8.4 L9.6 17.6" stroke="#fff" stroke-width=".7" fill="none" opacity=".75"/><path d="M8 7 L17 16 M17 6 L8 17" stroke="#e0301e" stroke-width="2.2"/></svg><div class="nc" style="top:3.8px;left:15.0px;transform:scaleX(0.87)">Delete Selected Shells</div></div>
<div class="btn" style="left:392px;top:763px;width:244px;height:24px"><svg style="left:2px;top:0" width="22" height="21" viewBox="0 0 20 20"><polygon points="0.5,4.4 8.9,7.3 8.9,18.7 1.2,13" fill="url(#grn)" stroke="#1e5a22" stroke-width="1.1" stroke-linejoin="round"/><polygon points="8.9,7.3 18.5,4.4 18.5,14.9 8.9,18.7" fill="#2f8a34" stroke="#1e5a22" stroke-width="1.1" stroke-linejoin="round"/><polygon points="0.5,4.4 9.5,0 18.5,4.4 8.9,7.3" fill="#7fd06a" stroke="#1e5a22" stroke-width="1.1" stroke-linejoin="round"/><path d="M1.6 5.3 L8.9 8 L17.4 5.4 M9.6 8.4 L9.6 17.6" stroke="#fff" stroke-width=".7" fill="none" opacity=".75"/><circle cx="13.5" cy="13.5" r="5.6" fill="#3aa23a" stroke="#1e6a1e" stroke-width=".8"/><path d="M10.4 13.5 h5 M13.4 10.8 l2.6 2.7 l-2.6 2.7" fill="none" stroke="#fff" stroke-width="1.7"/></svg><div class="nc" style="top:3.8px;left:16.0px;transform:scaleX(0.87)">Separate Selected Shells</div></div>
<div class="btn" style="left:143px;top:791px;width:245px;height:24px"><svg style="left:2px;top:0" width="22" height="22" viewBox="0 0 22 22"><g transform="translate(1.1,1.2)" stroke="#6f88ba" stroke-width=".7" stroke-linejoin="round"><polygon points="0,2.4 2.4,0 9.4,0 7,2.4" fill="#dbe6fa"/><polygon points="7,2.4 9.4,0 9.4,7 7,9.4" fill="#98b2e0"/><rect x="0" y="2.4" width="7" height="7" fill="#bcd0f2"/></g><g transform="translate(10.6,0.8)" stroke="#2a6a26" stroke-width=".7" stroke-linejoin="round"><polygon points="0,2.4 2.4,0 9.4,0 7,2.4" fill="#8ad27a"/><polygon points="7,2.4 9.4,0 9.4,7 7,9.4" fill="#2f8a30"/><rect x="0" y="2.4" width="7" height="7" fill="#55b045"/></g><g transform="translate(1.1,12)" stroke="#a08a18" stroke-width=".7" stroke-linejoin="round"><polygon points="0,2.4 2.4,0 9.4,0 7,2.4" fill="#fbf2a0"/><polygon points="7,2.4 9.4,0 9.4,7 7,9.4" fill="#d4b614"/><rect x="0" y="2.4" width="7" height="7" fill="#f6e23a"/></g><g transform="translate(10.6,11.5)" stroke="#56609a" stroke-width=".7" stroke-linejoin="round"><polygon points="0,2.4 2.4,0 9.4,0 7,2.4" fill="#d0d6f4"/><polygon points="7,2.4 9.4,0 9.4,7 7,9.4" fill="#8390d2"/><rect x="0" y="2.4" width="7" height="7" fill="#a9b4e6"/></g></svg><div class="nc" style="top:3.8px;left:15.0px;transform:scaleX(0.87)">Shells to Parts</div></div>
<div class="btn" style="left:392px;top:791px;width:244px;height:24px"><svg style="left:2px;top:0" width="22" height="21" viewBox="0 0 20 20"><g stroke="#3a447a" stroke-width=".9" stroke-linejoin="round"><polygon points="1,8 7,5.6 7,9 12,7 12,3 17.5,1 19,3 19,11 8,17.6 1,14.6" fill="#7f8cd0"/><polygon points="1,8 7,5.6 13,7.6 13,11.4 8,11.6 8,17.6 1,14.6" fill="#a9b4e6"/><polygon points="12,3 17.5,1 19,3 13,5.4" fill="#c3caee"/></g></svg><div class="nc" style="top:3.8px;left:16.0px;transform:scaleX(0.87)">Unify</div></div>
<div class="btn" style="left:356px;top:831.5px;width:149.5px;height:26.5px"><svg style="left:2px;top:2px" width="24" height="20" viewBox="0 0 24 20"><defs><linearGradient id="ag" x1="0" y1="0" x2="0" y2="1"><stop offset="0" stop-color="#8ae84a"/><stop offset="1" stop-color="#2fb81e"/></linearGradient></defs><path d="M2.500 6.800 Q1.500 9.500 2.500 12.200 h9.500 v4.200 l9.800 -7 l-9.800 -7 v4.400 z" fill="url(#ag)" stroke="#2a9a1a" stroke-width="1.100" stroke-linejoin="round"/></svg><div class="nc" style="top:5.0px;left:16.09999999999991px;transform:scaleX(0.87)">Follow Advice</div></div>
<div class="btn" style="left:512px;top:831.5px;width:57.5px;height:26.5px"><div class="nc" style="top:5.0px;left:0px;transform:scaleX(0.87)">Close</div></div>
<div class="btn" style="left:577.5px;top:831.5px;width:57.0px;height:26.5px"><div class="nc" style="top:5.0px;left:0px;transform:scaleX(0.87)">Help</div></div>
</div></body></html>
